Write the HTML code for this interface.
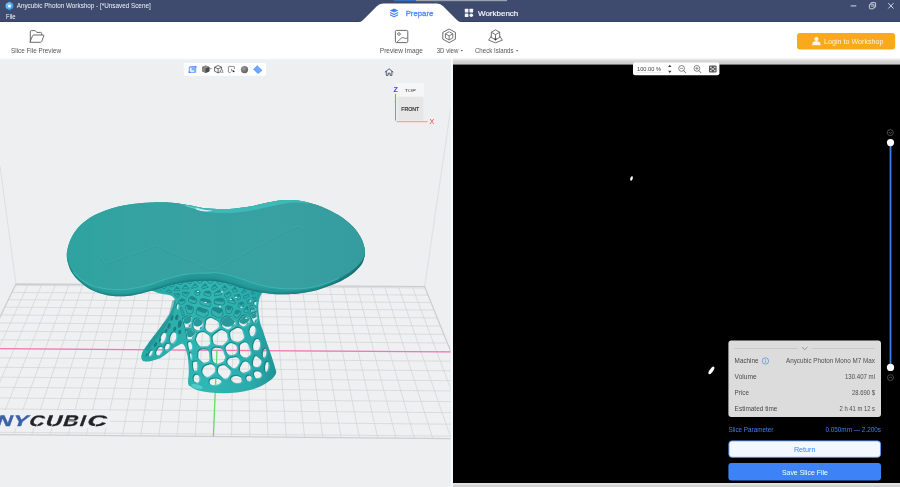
<!DOCTYPE html>
<html><head><meta charset="utf-8"><title>Anycubic Photon Workshop</title>
<style>
html,body{margin:0;padding:0;background:#edeff1;overflow:hidden}
svg{display:block;will-change:transform;font-family:"Liberation Sans",sans-serif}
</style></head><body>
<svg width="900" height="487" viewBox="0 0 900 487">
<rect x="0" y="0" width="900" height="487" fill="#edeff1"/>
<rect x="0" y="22" width="900" height="37" fill="#ffffff"/>
<rect x="0" y="58.6" width="900" height="1" fill="#f4f5f6"/>
<rect x="0" y="0" width="900" height="22" fill="#3e4b6e"/>
<rect x="0" y="21" width="900" height="1" fill="#35415f"/>
<rect x="394" y="0" width="22" height="1.2" fill="#2f6fc0"/>
<rect x="416" y="0" width="91" height="1.2" fill="#9aa0ae"/>
<path d="M358.2,22 Q361,22 362.6,20.4 L376.8,6.2 Q379.4,3.6 383,3.6 L437,3.6 Q440.6,3.6 443.2,6.2 L457.4,20.4 Q459,22 461.8,22 Z" fill="#ffffff"/>
<defs><linearGradient id="appg" x1="0" y1="0" x2="1" y2="1"><stop offset="0" stop-color="#7fd6ff"/><stop offset="1" stop-color="#2f8df0"/></linearGradient></defs>
<path d="M9.5,2.2 L12.9,4.1 L12.9,7.9 L9.5,9.8 L6.1,7.9 L6.1,4.1 Z" fill="url(#appg)" stroke="url(#appg)" stroke-width="0.8" stroke-linejoin="round"/>
<path d="M9.5,4.4 L11,5.2 L11,6.9 L9.5,7.7 L8,6.9 L8,5.2 Z" fill="#eaf6ff"/>
<text x="16.7" y="8.3" font-size="6.7" fill="#f2f4f8" textLength="134" lengthAdjust="spacingAndGlyphs">Anycubic Photon Workshop - [*Unsaved Scene]</text>
<text x="6" y="19.3" font-size="6.8" fill="#f2f4f8" textLength="9.6" lengthAdjust="spacingAndGlyphs">File</text>
<path d="M394.1,8.6 L398.4,10.6 L394.1,12.6 L389.8,10.6 Z" fill="#3f86f7"/>
<path d="M390,12.6 L394.1,14.5 L398.2,12.6" fill="none" stroke="#3f86f7" stroke-width="1.1" stroke-linejoin="round"/>
<path d="M390,14.8 L394.1,16.7 L398.2,14.8" fill="none" stroke="#3f86f7" stroke-width="1.1" stroke-linejoin="round"/>
<text x="405.7" y="15.9" font-size="7.9" fill="#4a8cf8" textLength="27.6" lengthAdjust="spacingAndGlyphs" stroke="#4a8cf8" stroke-width="0.3">Prepare</text>
<rect x="464.8" y="8.8" width="3.6" height="3.6" rx="0.5" fill="#f4f6fa"/>
<rect x="469.5" y="8.8" width="3.6" height="3.6" rx="0.5" fill="#f4f6fa"/>
<rect x="464.8" y="13.4" width="3.6" height="3.6" rx="0.5" fill="#f4f6fa"/>
<circle cx="471.3" cy="15.2" r="1.8" fill="#f4f6fa"/>
<text x="478" y="15.9" font-size="7.9" fill="#f4f6fa" textLength="40.3" lengthAdjust="spacingAndGlyphs" stroke="#f4f6fa" stroke-width="0.2">Workbench</text>
<rect x="850.7" y="5.4" width="5.6" height="1" fill="#d5d9e2"/>
<rect x="869.4" y="4.2" width="4.6" height="4.6" rx="0.8" fill="none" stroke="#d5d9e2" stroke-width="0.9"/>
<path d="M871,4.2 L871,2.9 Q871,2.6 871.4,2.6 L875.2,2.6 Q875.6,2.6 875.6,3 L875.6,6.8 Q875.6,7.2 875.2,7.2 L874,7.2" fill="none" stroke="#d5d9e2" stroke-width="0.9"/>
<rect x="870.6" y="5.6" width="2.6" height="0.8" fill="#d5d9e2"/>
<path d="M888.3,3.2 L893.5,8.5 M893.5,3.2 L888.3,8.5" stroke="#d5d9e2" stroke-width="1" fill="none"/>
<path d="M30.3,41.5 L30.3,31.8 Q30.3,30.6 31.5,30.6 L35.2,30.6 L36.8,32.4 L40.6,32.4 Q41.6,32.4 41.6,33.4 L41.6,35" fill="none" stroke="#5a5a5a" stroke-width="0.9" stroke-linejoin="round"/>
<path d="M29.8,42.3 L32.6,35.6 Q32.9,35 33.6,35 L43.2,35 Q44.1,35 43.8,35.9 L41.6,41.6 Q41.3,42.3 40.6,42.3 Z" fill="none" stroke="#5a5a5a" stroke-width="0.9" stroke-linejoin="round"/>
<text x="11" y="52.7" font-size="6.8" fill="#555555" textLength="50" lengthAdjust="spacingAndGlyphs">Slice File Preview</text>
<rect x="395.4" y="30.4" width="12.4" height="12.2" rx="1.3" fill="none" stroke="#5a5a5a" stroke-width="0.9"/>
<circle cx="399" cy="34" r="1.3" fill="none" stroke="#5a5a5a" stroke-width="0.8"/>
<path d="M397,42.2 L401.2,38.2 Q402.8,36.9 404.2,38 L405.2,38.4 Q406.5,38.6 407.6,37.6" fill="none" stroke="#5a5a5a" stroke-width="0.8"/>
<text x="379.8" y="52.7" font-size="6.8" fill="#555555" textLength="43" lengthAdjust="spacingAndGlyphs">Preview Image</text>
<path d="M449.1,28.999999999999996 L455.40000000000003,32.4 L455.40000000000003,39.199999999999996 L449.1,42.599999999999994 L442.8,39.199999999999996 L442.8,32.4 Z" fill="none" stroke="#5a5a5a" stroke-width="0.9" stroke-linejoin="round"/>
<path d="M449.1,31.699999999999996 L452.8,33.8 L452.8,37.9 L449.1,40.0 L445.40000000000003,37.9 L445.40000000000003,33.8 Z M445.40000000000003,33.8 L449.1,35.9 L452.8,33.8 M449.1,35.9 L449.1,40.0" fill="none" stroke="#5a5a5a" stroke-width="0.8" stroke-linejoin="round"/>
<text x="436.7" y="52.7" font-size="6.8" fill="#555555" textLength="21.7" lengthAdjust="spacingAndGlyphs">3D view</text>
<path d="M460.8,50 L463,50 L461.9,51.4 Z" fill="#5a5a5a"/>
<path d="M495.5,29.799999999999997 L499.7,32.199999999999996 L499.7,37.4 L495.5,39.8 L491.3,37.4 L491.3,32.199999999999996 Z M491.3,32.199999999999996 L495.5,34.599999999999994 L499.7,32.199999999999996 M495.5,34.599999999999994 L495.5,39.8" fill="none" stroke="#5a5a5a" stroke-width="0.85" stroke-linejoin="round"/>
<path d="M491.3,36.0 L488.7,40.199999999999996 L495.5,42.8 L502.3,40.199999999999996 L499.7,36.0" fill="none" stroke="#5a5a5a" stroke-width="0.85" stroke-linejoin="round"/>
<path d="M494.1,38.599999999999994 L496.9,38.599999999999994 L495.5,40.8 Z" fill="#333"/>
<text x="474.9" y="52.7" font-size="6.8" fill="#555555" textLength="38.7" lengthAdjust="spacingAndGlyphs">Check Islands</text>
<path d="M516,50 L518.2,50 L517.1,51.4 Z" fill="#5a5a5a"/>
<rect x="797" y="33" width="98.2" height="16.4" rx="3" fill="#f9aa1b"/>
<circle cx="816.4" cy="39" r="2.1" fill="#fff8e8"/>
<path d="M812.2,45.2 C812.2,42 813.6,41.2 816.4,41.2 C819.2,41.2 820.6,42 820.6,45.2 Z" fill="#fff8e8"/>
<text x="824" y="43.9" font-size="7" fill="#fff3d6" textLength="59.5" lengthAdjust="spacingAndGlyphs">Login to Workshop</text>
<defs><clipPath id="lp"><rect x="0" y="59.6" width="450.4" height="427.4"/></clipPath></defs>
<g clip-path="url(#lp)">
<polygon points="16.00,284.00 424.60,286.60 486.00,438.90 -57.00,434.20" fill="#eff0f2"/>
<path d="M16,284 L0,166" stroke="#d9dadd" stroke-width="0.8" fill="none"/>
<path d="M424.6,286.6 L451,107" stroke="#d9dadd" stroke-width="0.8" fill="none"/>
<path d="M28.27,284.08L-40.73,434.34M41.90,284.16L-22.64,434.50M55.54,284.25L-4.55,434.65M69.19,284.34L13.56,434.81M82.84,284.43L31.67,434.97M96.50,284.51L49.80,435.12M110.16,284.60L67.93,435.28M123.83,284.69L86.08,435.44M137.50,284.77L104.24,435.60M151.18,284.86L122.40,435.75M164.87,284.95L140.58,435.91M178.56,285.03L158.76,436.07M192.26,285.12L176.96,436.23M205.96,285.21L195.17,436.38M219.67,285.30L213.38,436.54M233.38,285.38L231.61,436.70M247.10,285.47L249.85,436.86M260.83,285.56L268.09,437.01M274.56,285.65L286.35,437.17M288.30,285.73L304.61,437.33M302.04,285.82L322.89,437.49M315.79,285.91L341.18,437.65M329.54,286.00L359.48,437.80M343.30,286.08L377.78,437.96M357.07,286.17L396.10,438.12M370.84,286.26L414.43,438.28M384.61,286.35L432.76,438.44M398.40,286.43L451.11,438.60M412.19,286.52L469.47,438.76M-55.82,431.78L485.01,436.44M-50.07,419.95L480.16,424.42M-44.55,408.57L475.51,412.87M-39.22,397.63L471.03,401.76M-34.10,387.08L466.71,391.06M-29.16,376.92L462.56,380.75M-24.40,367.12L458.55,370.81M-19.80,357.66L454.68,361.21M-15.36,348.53L450.95,351.95M-11.07,339.70L447.34,343.01M-6.93,331.17L443.86,334.36M-2.91,322.92L440.48,326.00M0.97,314.93L437.22,317.91M4.73,307.19L434.06,310.07M8.37,299.70L431.00,302.49M11.90,292.43L428.04,295.13M15.33,285.38L425.16,288.00" stroke="#d2d3d5" stroke-width="0.7" fill="none"/>
<polygon points="16.00,284.00 424.60,286.60 486.00,438.90 -57.00,434.20" fill="none" stroke="#cdced0" stroke-width="1.3"/>
<path d="M-15.36,348.53L450.95,351.95" stroke="#f476b0" stroke-width="1.25"/>
<path d="M216.97,350.23L213.38,436.54" stroke="#5fe05f" stroke-width="1.2"/>
<rect x="0" y="410.3" width="110" height="17.6" fill="#eff0f2"/>
<g transform="translate(0,425.7) skewX(-20)" font-weight="bold" font-size="15.2" stroke-width="0.35" stroke-linejoin="round"><text x="-4.5" y="0" textLength="15.7" lengthAdjust="spacingAndGlyphs" fill="#3b62a6" stroke="#3b62a6">N</text><text x="11.6" y="0" textLength="15.4" lengthAdjust="spacingAndGlyphs" fill="#3b62a6" stroke="#3b62a6">Y</text><text x="28" y="0" textLength="15.0" lengthAdjust="spacingAndGlyphs" fill="#222329" stroke="#222329">C</text><text x="44.4" y="0" textLength="16.2" lengthAdjust="spacingAndGlyphs" fill="#222329" stroke="#222329">U</text><text x="62" y="0" textLength="15.0" lengthAdjust="spacingAndGlyphs" fill="#222329" stroke="#222329">B</text><text x="78.8" y="0" textLength="5.2" lengthAdjust="spacingAndGlyphs" fill="#222329" stroke="#222329">I</text><text x="86" y="0" textLength="19.4" lengthAdjust="spacingAndGlyphs" fill="#222329" stroke="#222329">C</text></g>
<path d="M36.5,426.5L38.3,421.6M41.2,418.6L45,419.4M51.5,426.5L53.2,421.8M68,421L79,421M95,426.5L96.8,421.6M100.5,418.6L107,419.4" stroke="#eff0f2" stroke-width="0.9" fill="none"/>
<defs><linearGradient id="topg" gradientUnits="userSpaceOnUse" x1="67" y1="0" x2="365" y2="0"><stop offset="0" stop-color="#2ea3a0"/><stop offset="0.3" stop-color="#36a2a1"/><stop offset="0.75" stop-color="#38a0a1"/><stop offset="1" stop-color="#349c9e"/></linearGradient><linearGradient id="rimg" gradientUnits="userSpaceOnUse" x1="67" y1="0" x2="365" y2="0"><stop offset="0" stop-color="#2ba6a3"/><stop offset="0.25" stop-color="#2aa3a1"/><stop offset="0.42" stop-color="#249796"/><stop offset="0.6" stop-color="#289f9e"/><stop offset="0.85" stop-color="#269a99"/><stop offset="0.93" stop-color="#1d8385"/><stop offset="1" stop-color="#1a777b"/></linearGradient><linearGradient id="pedg" gradientUnits="userSpaceOnUse" x1="150" y1="0" x2="277" y2="0"><stop offset="0" stop-color="#29a9a8"/><stop offset="0.45" stop-color="#30b7b4"/><stop offset="0.8" stop-color="#2aabab"/><stop offset="1" stop-color="#1f9395"/></linearGradient></defs>
<mask id="pedm" maskUnits="userSpaceOnUse" x="130" y="265" width="160" height="135"><rect x="130" y="265" width="160" height="135" fill="#fff"/><path d="M201.7,346.6L207.6,346.0L208.9,345.2L209.6,344.4L210.0,343.3L209.7,337.6L209.3,336.1L208.0,334.7L204.0,332.2L202.2,332.1L199.3,333.1L197.7,334.5L196.3,338.2L196.1,339.7L196.6,341.5L198.8,345.1L200.3,346.3ZM227.8,338.8L226.7,333.2L225.8,332.1L222.9,330.5L221.1,330.3L219.4,330.9L214.1,334.7L213.2,335.8L212.8,336.8L212.7,337.8L213.0,341.6L213.6,343.0L214.6,344.1L216.0,344.7L221.2,345.3L222.3,345.2L223.3,344.8L226.8,341.6L227.6,340.3ZM236.5,341.7L237.9,341.9L239.0,341.7L242.1,340.0L243.5,338.7L244.0,337.2L243.9,335.7L242.3,330.2L241.2,329.0L238.6,327.9L237.5,327.9L236.4,328.2L231.6,331.0L230.6,332.1L230.1,333.5L230.7,337.6L231.4,339.3L232.8,340.4ZM255.6,331.1L255.5,328.5L254.6,326.6L253.9,326.0L253.1,325.8L252.3,326.0L251.6,326.5L250.3,328.3L249.6,330.9L249.7,333.5L250.6,335.4L251.3,336.0L252.1,336.2L252.9,336.0L253.6,335.5L254.9,333.7ZM198.3,356.6L198.4,357.7L199.1,359.0L202.7,362.3L203.7,362.7L204.8,362.8L207.3,362.1L208.3,361.5L209.0,360.7L209.6,359.0L209.1,352.9L208.7,351.4L207.5,350.1L206.1,349.5L201.9,349.6L200.5,350.0L199.3,350.9L198.6,352.2ZM216.3,347.8L214.8,347.9L213.8,348.4L212.7,349.4L212.2,350.4L212.0,351.9L212.7,359.6L213.1,361.1L214.1,362.2L216.1,363.5L218.0,363.7L221.9,362.3L223.2,361.6L223.9,360.7L224.9,358.6L225.2,356.7L222.9,350.5L222.1,349.3L221.2,348.7L220.2,348.3ZM226.8,345.7L225.8,347.3L225.7,349.2L227.2,353.0L228.1,354.1L229.3,354.8L231.1,355.0L234.6,354.4L235.5,353.8L236.3,353.1L236.8,352.1L237.0,351.0L236.9,347.2L236.4,345.8L235.3,344.7L231.9,343.3L230.4,343.3L229.0,343.8ZM240.1,352.9L240.5,354.4L241.2,355.4L242.8,356.7L244.2,357.3L246.6,357.4L247.6,357.1L248.5,356.6L250.1,354.9L250.7,353.5L250.7,352.0L248.3,344.7L247.2,343.3L245.9,342.6L244.0,342.6L241.8,343.6L240.7,344.6L240.1,345.6L239.9,346.7ZM253.8,349.5L255.1,350.2L256.9,350.2L258.3,349.7L259.5,348.5L260.1,345.6L260.1,342.7L259.3,340.4L258.1,339.2L257.5,339.1L256.0,339.5L255.0,340.6L254.1,342.3L253.5,344.3L253.2,346.4L253.4,348.8ZM266.3,353.3L266.4,351.6L266.1,350.0L265.6,349.2L264.9,349.0L263.7,350.2L262.9,353.1L262.9,356.0L263.3,357.1L263.8,357.6L264.6,357.5L265.4,356.5L265.9,355.2ZM193.1,362.5L193.1,366.8L194.0,370.2L194.2,370.6L194.7,370.7L196.7,370.6L197.2,368.8L197.4,366.6L197.3,364.2L196.8,361.7L194.9,361.7ZM206.0,365.7L204.7,366.5L203.9,367.3L202.6,370.1L202.4,372.0L202.9,373.4L204.8,376.1L206.0,376.8L207.8,377.0L209.5,376.4L214.3,372.8L215.0,371.0L215.1,368.0L214.7,366.9L214.0,365.9L211.7,364.5L209.9,364.5ZM230.2,374.2L230.7,372.5L230.6,371.3L230.2,370.3L229.5,369.4L225.3,365.8L223.9,365.3L222.4,365.4L219.9,366.3L218.6,367.7L218.1,369.1L218.0,371.2L218.4,373.0L219.1,373.9L223.3,378.3L224.4,378.7L225.5,378.8L227.2,378.3L228.3,377.3ZM230.6,358.1L229.2,358.6L227.9,359.9L227.4,361.7L227.8,363.5L228.7,364.7L232.2,367.7L234.0,368.2L235.8,367.8L237.3,366.5L239.4,362.5L239.6,361.1L239.2,359.4L238.0,358.0L236.3,357.3ZM240.3,367.2L239.9,369.0L240.3,370.7L241.5,372.1L243.2,372.7L244.7,372.6L248.7,371.1L249.8,370.1L250.5,368.4L250.3,366.6L248.6,363.2L247.2,362.0L245.8,361.6L244.4,361.8L242.8,362.8ZM256.9,356.6L255.7,356.1L254.6,357.4L253.5,359.9L253.0,362.4L253.1,365.3L254.4,366.6L255.8,367.1L257.6,367.1L259.3,366.3L260.2,365.2L261.4,362.4L261.3,361.0L260.7,359.7ZM254.3,372.5L254.0,373.6L254.1,374.7L255.3,377.6L256.9,378.2L258.6,378.1L260.2,377.5L261.2,376.4L261.6,375.2L261.4,374.1L260.8,373.0L259.7,372.0L258.1,371.5L256.8,371.4L255.2,371.8ZM268.5,366.6L268.4,363.3L267.9,362.2L267.2,362.0L266.5,362.5L266.0,363.4L265.1,366.5L265.1,369.7L265.5,370.9L265.9,371.4L266.6,371.4L267.4,370.4L268.1,368.7ZM196.6,382.5L197.5,382.7L198.7,381.9L199.4,380.7L199.7,378.9L199.5,377.4L198.8,376.0L197.8,375.1L196.7,374.8L195.5,375.1L194.6,375.9L193.9,377.2L193.7,378.7L193.9,380.0L194.3,381.2ZM210.0,380.3L209.6,382.1L210.1,383.9L211.0,384.4L212.8,384.9L215.6,385.0L218.2,384.4L220.2,383.3L221.2,381.9L220.9,380.6L220.3,379.9L219.0,379.2L217.2,378.7L215.2,378.6L212.9,378.9L211.1,379.5ZM241.6,381.6L241.2,378.0L240.2,377.2L238.6,376.5L236.1,376.1L233.7,376.5L232.1,377.2L231.2,378.6L231.2,379.7L231.8,380.8L233.2,382.0L234.8,382.7L236.6,383.0L238.7,383.0L240.6,382.4ZM251.6,378.6L251.5,377.6L251.0,376.7L250.2,376.1L249.2,375.8L248.2,375.9L247.3,376.4L246.7,377.2L246.4,378.2L246.5,379.2L247.0,380.1L247.8,380.7L248.8,381.0L249.8,380.9L250.7,380.4L251.3,379.6ZM207.4,319.4L206.5,320.4L206.1,321.4L205.5,327.1L205.8,328.9L206.9,330.4L209.5,332.0L210.6,332.3L211.8,332.2L213.1,331.6L218.3,327.9L219.0,326.6L219.1,325.2L218.6,322.7L217.5,321.2L212.3,318.4L211.2,318.0L209.3,318.2ZM199.0,318.9L197.6,318.7L195.8,319.1L194.5,320.3L193.8,322.1L193.5,325.7L193.9,327.5L194.5,328.4L195.7,329.4L197.5,330.1L199.1,330.0L201.0,329.2L202.0,328.2L202.6,326.8L202.9,323.0L202.6,321.5L201.5,320.1ZM227.4,316.8L225.9,317.0L224.3,318.0L222.2,320.3L221.8,321.4L221.7,322.6L222.2,325.4L223.0,326.9L223.9,327.6L226.1,328.8L228.0,329.2L229.4,328.8L234.1,326.0L235.2,324.5L235.4,323.0L235.2,321.9L234.7,320.9L231.4,317.7L230.1,317.1ZM240.0,320.0L239.3,321.7L239.2,322.8L239.5,323.9L240.6,325.3L242.6,326.3L243.7,326.3L244.7,326.1L247.9,324.1L249.0,323.1L249.5,321.7L249.4,319.8L248.4,317.4L247.3,316.4L245.9,315.8L244.4,315.8L243.1,316.4ZM250.9,314.5L250.5,314.9L253.4,321.6L256.0,322.0L257.1,320.1L256.1,312.4ZM254.2,303.9L255.9,305.1L256.3,301.5L254.5,302.4ZM188.1,343.2L189.2,350.1L191.5,349.9L192.0,348.2L192.1,346.5L191.8,344.5L191.1,343.1L190.2,342.1L189.0,342.2ZM190.8,359.6L191.2,359.3L191.5,358.6L191.7,356.3L191.3,354.1L190.9,353.4L190.4,353.2L189.8,353.9ZM185.9,330.1L187.2,335.5L187.6,339.3L193.0,338.8L195.2,332.6L191.3,329.7ZM191.5,317.0L186.8,316.8L183.4,319.0L183.3,319.9L185.4,327.3L190.4,326.9ZM252.3,306.1L250.7,306.6L251.2,311.2L255.7,309.4L255.7,308.4Z" fill="#000"/><g fill="#000"><ellipse cx="163.2" cy="337.9" rx="2.3" ry="5.4" transform="rotate(20 163.2 337.9)"/><ellipse cx="173.3" cy="337.8" rx="2.9" ry="5.4" transform="rotate(15 173.3 337.8)"/><ellipse cx="167.3" cy="347" rx="2" ry="3.4" transform="rotate(25 167.3 347)"/><ellipse cx="159.4" cy="351.2" rx="2.4" ry="4.4" transform="rotate(28 159.4 351.2)"/><ellipse cx="150.9" cy="353.2" rx="1.2" ry="3" transform="rotate(28 150.9 353.2)"/><ellipse cx="177.6" cy="306.8" rx="0.8" ry="2.5" transform="rotate(10 177.6 306.8)"/></g></mask>
<path d="M197.6,318.7L195.8,319.1L194.5,320.3L193.8,322.1L193.6,324.9L193.6,325.0L193.7,325.1L194.1,325.4L194.1,325.4L194.5,325.7L194.6,325.7L195.0,325.9L195.1,326.0L195.5,326.1L195.6,326.2L196.0,326.3L196.1,326.3L196.5,326.4L196.6,326.4L197.1,326.5L197.2,326.5L197.6,326.5L197.7,326.5L198.2,326.4L198.3,326.4L198.7,326.3L198.8,326.3L199.2,326.2L199.3,326.1L199.7,326.0L199.8,325.9L200.2,325.7L200.3,325.7L200.6,325.4L200.7,325.4L201.1,325.1L201.1,325.0L201.5,324.7L201.5,324.6L201.8,324.3L201.9,324.2L202.1,323.8L202.2,323.8L202.4,323.4L202.4,323.3L202.6,322.9L202.6,322.8L202.7,322.3L202.8,322.3L202.6,321.5L201.5,320.1L199.0,318.9Z" fill="#27999b"/>
<path d="M201.0,329.2L202.0,328.2L202.6,326.8L202.6,326.5L202.4,326.5L202.2,326.5L201.9,326.5L201.6,326.6L201.4,326.7L201.2,326.8L200.9,326.9L200.7,327.1L200.5,327.2L200.4,327.4L200.2,327.6L200.1,327.9L200.0,328.1L199.9,328.3L199.8,328.6L199.8,328.8L199.8,329.1L199.8,329.4L199.8,329.6L199.8,329.7Z" fill="#2aa5a5"/>
<path d="M225.9,317.0L224.3,318.0L222.2,320.3L221.8,321.4L221.7,322.6L222.0,324.1L222.1,324.3L222.2,324.4L222.6,324.8L222.7,324.9L223.2,325.3L223.3,325.4L223.8,325.7L223.9,325.8L224.5,326.1L224.6,326.1L225.2,326.4L225.2,326.4L225.9,326.6L226.0,326.6L226.6,326.7L226.7,326.8L227.3,326.8L227.4,326.8L228.1,326.8L228.2,326.8L228.8,326.8L228.9,326.7L229.5,326.6L229.6,326.6L230.3,326.4L230.4,326.4L230.9,326.1L231.0,326.1L231.6,325.8L231.7,325.7L232.2,325.4L232.3,325.3L232.8,324.9L232.9,324.8L233.3,324.4L233.4,324.3L233.8,323.8L233.9,323.7L234.2,323.2L234.3,323.1L234.6,322.5L234.6,322.5L234.9,321.9L234.9,321.8L235.0,321.5L234.7,320.9L231.4,317.7L230.1,317.1L227.4,316.8Z" fill="#27999b"/>
<path d="M234.1,326.0L235.2,324.5L235.2,324.3L234.9,324.3L234.5,324.3L234.2,324.4L233.8,324.5L233.4,324.6L233.1,324.8L232.8,325.0L232.5,325.2L232.2,325.4L231.9,325.7L231.7,326.0L231.5,326.3L231.4,326.7L231.2,327.0L231.1,327.4L231.1,327.8L231.1,327.8Z" fill="#2aa5a5"/>
<path d="M239.3,321.7L239.2,322.0L239.5,322.3L239.6,322.4L240.0,322.7L240.1,322.7L240.5,323.0L240.6,323.1L241.0,323.3L241.1,323.3L241.5,323.5L241.6,323.6L242.1,323.7L242.2,323.7L242.7,323.8L242.8,323.8L243.2,323.9L243.3,323.9L243.8,323.9L243.9,323.9L244.4,323.8L244.5,323.8L245.0,323.7L245.1,323.7L245.5,323.6L245.6,323.5L246.1,323.3L246.2,323.3L246.6,323.1L246.7,323.0L247.1,322.7L247.2,322.7L247.5,322.4L247.6,322.3L248.0,322.0L248.0,321.9L248.3,321.5L248.4,321.4L248.7,321.0L248.7,320.9L248.9,320.5L249.0,320.4L249.2,320.0L249.2,319.9L249.3,319.5L248.4,317.4L247.3,316.4L245.9,315.8L244.4,315.8L243.1,316.4L240.0,320.0Z" fill="#27999b"/>
<path d="M247.9,324.1L249.0,323.1L249.2,322.4L249.0,322.4L248.8,322.4L248.5,322.5L248.2,322.5L247.9,322.6L247.7,322.8L247.4,322.9L247.2,323.1L247.0,323.3L246.8,323.5L246.6,323.7L246.5,324.0L246.4,324.2L246.3,324.5L246.2,324.8L246.2,325.0L246.2,325.2Z" fill="#2aa5a5"/>
<path d="M250.5,314.9L252.0,318.3L252.0,318.3L252.4,318.4L252.4,318.4L252.8,318.4L252.9,318.4L253.2,318.4L253.3,318.4L253.6,318.4L253.7,318.4L254.0,318.3L254.1,318.3L254.4,318.2L254.4,318.2L254.7,318.1L254.8,318.0L255.1,317.9L255.2,317.8L255.4,317.6L255.5,317.6L255.8,317.4L255.8,317.3L256.0,317.1L256.1,317.0L256.3,316.8L256.4,316.7L256.5,316.5L256.6,316.4L256.6,316.3L256.1,312.4L250.9,314.5Z" fill="#27999b"/>
<path d="M256.0,322.0L257.1,320.1L257.0,319.2L256.9,319.2L256.8,319.2L256.6,319.2L256.4,319.2L256.2,319.2L256.0,319.3L255.9,319.3L255.7,319.4L255.6,319.5L255.4,319.6L255.3,319.7L255.2,319.9L255.1,320.0L255.0,320.2L254.9,320.3L254.8,320.5L254.8,320.7L254.8,320.8L254.7,321.0L254.8,321.2L254.8,321.4L254.8,321.5L254.9,321.7L255.0,321.9Z" fill="#2aa5a5"/>
<path d="M187.2,335.5L187.3,336.5L187.4,336.5L187.5,336.6L187.9,336.7L188.0,336.8L188.4,336.9L188.5,336.9L188.9,337.0L189.0,337.0L189.4,337.1L189.5,337.1L190.0,337.1L190.1,337.1L190.5,337.0L190.6,337.0L191.0,336.9L191.1,336.9L191.6,336.8L191.6,336.7L192.1,336.6L192.1,336.5L192.5,336.3L192.6,336.3L193.0,336.0L193.1,336.0L193.4,335.7L193.5,335.6L193.8,335.3L193.8,335.2L194.1,334.9L194.2,334.8L194.4,334.5L194.5,334.4L194.7,334.0L194.7,333.9L194.9,333.5L194.9,333.4L195.0,333.0L195.1,332.9L195.1,332.6L191.3,329.7L185.9,330.1Z" fill="#27999b"/>
<path d="M193.0,338.8L194.1,335.8L194.0,335.8L193.7,335.9L193.5,336.0L193.3,336.1L193.1,336.3L192.9,336.5L192.7,336.6L192.5,336.9L192.4,337.1L192.3,337.3L192.2,337.5L192.2,337.8L192.1,338.0L192.1,338.3L192.1,338.6L192.2,338.8L192.2,338.8Z" fill="#2aa5a5"/>
<path d="M186.8,316.8L183.4,319.0L183.3,319.9L184.2,323.2L184.4,323.3L184.5,323.4L184.9,323.5L185.0,323.5L185.3,323.6L185.4,323.7L185.8,323.7L185.9,323.8L186.3,323.8L186.4,323.8L186.8,323.8L186.9,323.8L187.3,323.8L187.4,323.7L187.7,323.7L187.8,323.6L188.2,323.5L188.3,323.5L188.6,323.4L188.7,323.3L189.1,323.1L189.2,323.1L189.5,322.9L189.6,322.8L189.9,322.6L189.9,322.5L190.2,322.2L190.3,322.2L190.5,321.9L190.6,321.8L190.8,321.5L190.8,321.4L191.0,321.0L191.0,321.0L191.4,317.8L191.4,317.7L191.3,317.6L191.2,317.3L191.2,317.2L191.1,317.0Z" fill="#27999b"/>
<path d="M190.4,326.9L190.7,324.0L190.5,324.0L190.3,324.1L190.1,324.2L189.9,324.3L189.7,324.4L189.5,324.5L189.4,324.7L189.2,324.8L189.1,325.0L189.0,325.2L188.9,325.4L188.8,325.6L188.7,325.8L188.7,326.0L188.7,326.3L188.7,326.5L188.7,326.7L188.8,326.9L188.8,327.0Z" fill="#2aa5a5"/>
<path d="M250.7,306.6L251.1,310.3L251.2,310.3L251.3,310.4L251.6,310.4L251.7,310.5L251.9,310.5L252.0,310.5L252.2,310.5L252.3,310.5L252.5,310.5L252.6,310.5L252.9,310.5L253.0,310.5L253.0,310.5L254.4,309.9L254.4,309.9L254.5,309.9L254.7,309.7L254.7,309.6L254.9,309.5L255.0,309.4L255.1,309.2L255.2,309.1L255.3,308.9L255.4,308.9L255.5,308.7L255.5,308.6L255.6,308.4L252.3,306.1Z" fill="#27999b"/>
<path d="M255.7,309.4L255.7,308.9L255.6,308.9L255.5,308.9L255.4,308.8L255.2,308.8L255.1,308.8L254.9,308.9L254.8,308.9L254.7,308.9L254.6,309.0L254.4,309.1L254.3,309.2L254.2,309.3L254.1,309.4L254.1,309.5L254.0,309.6L253.9,309.7L253.9,309.8L253.8,310.0L253.8,310.1L253.8,310.2Z" fill="#2aa5a5"/>
<g mask="url(#pedm)"><path d="M148.00,289.00C149.67,289.67 155.00,292.07 158.00,293.00C161.00,293.93 163.67,294.07 166.00,294.60C168.33,295.13 170.57,295.47 172.00,296.20C173.43,296.93 174.17,298.53 174.60,299.00L174.60,299.00C174.37,300.17 173.90,303.67 173.20,306.00C172.50,308.33 171.40,310.93 170.40,313.00C169.40,315.07 168.83,316.08 167.20,318.40C165.57,320.72 162.82,324.00 160.60,326.90C158.38,329.80 156.13,332.83 153.90,335.80C151.67,338.77 149.05,342.12 147.20,344.70C145.35,347.28 143.82,349.27 142.80,351.30C141.78,353.33 141.38,355.97 141.10,356.90L141.10,356.90C141.38,357.55 141.78,360.02 142.80,360.80C143.82,361.58 145.35,361.70 147.20,361.60C149.05,361.50 151.67,360.80 153.90,360.20C156.13,359.60 159.48,358.37 160.60,358.00L160.60,358.00C161.15,357.63 162.62,356.73 163.90,355.80C165.18,354.87 166.63,353.70 168.30,352.40C169.97,351.10 172.05,349.28 173.90,348.00C175.75,346.72 177.98,345.47 179.40,344.70C180.82,343.93 181.90,343.62 182.40,343.40L182.40,343.40C182.83,343.98 184.23,345.20 185.00,346.90C185.77,348.60 186.47,351.33 187.00,353.60C187.53,355.87 187.90,357.43 188.20,360.50C188.50,363.57 188.83,368.47 188.80,372.00C188.77,375.53 188.00,379.43 188.00,381.70C188.00,383.97 188.67,384.95 188.80,385.60L188.80,385.60C190.12,386.33 193.17,388.85 196.70,390.00C200.23,391.15 205.57,391.95 210.00,392.50C214.43,393.05 218.85,393.30 223.30,393.30C227.75,393.30 232.25,393.05 236.70,392.50C241.15,391.95 245.83,391.12 250.00,390.00C254.17,388.88 258.08,387.60 261.70,385.80C265.32,384.00 269.35,381.13 271.70,379.20C274.05,377.27 275.12,375.03 275.80,374.20L275.80,374.20C275.88,373.78 276.22,372.12 276.30,371.70L276.30,371.70C275.80,370.03 274.63,365.87 273.30,361.70C271.97,357.53 269.97,351.70 268.30,346.70C266.63,341.70 264.68,335.82 263.30,331.70C261.92,327.58 260.83,325.83 260.00,322.00C259.17,318.17 258.43,312.45 258.30,308.70C258.17,304.95 258.58,302.12 259.20,299.50C259.82,296.88 260.87,294.92 262.00,293.00C263.13,291.08 265.33,288.83 266.00,288.00L255,276 L205,270 L160,278 Z" fill="url(#pedg)"/><g fill="none" stroke="#17797c" stroke-opacity="0.75" stroke-width="1.3" transform="translate(-0.55,-0.55)"><path d="M201.7,346.6L207.6,346.0L208.9,345.2L209.6,344.4L210.0,343.3L209.7,337.6L209.3,336.1L208.0,334.7L204.0,332.2L202.2,332.1L199.3,333.1L197.7,334.5L196.3,338.2L196.1,339.7L196.6,341.5L198.8,345.1L200.3,346.3ZM227.8,338.8L226.7,333.2L225.8,332.1L222.9,330.5L221.1,330.3L219.4,330.9L214.1,334.7L213.2,335.8L212.8,336.8L212.7,337.8L213.0,341.6L213.6,343.0L214.6,344.1L216.0,344.7L221.2,345.3L222.3,345.2L223.3,344.8L226.8,341.6L227.6,340.3ZM236.5,341.7L237.9,341.9L239.0,341.7L242.1,340.0L243.5,338.7L244.0,337.2L243.9,335.7L242.3,330.2L241.2,329.0L238.6,327.9L237.5,327.9L236.4,328.2L231.6,331.0L230.6,332.1L230.1,333.5L230.7,337.6L231.4,339.3L232.8,340.4ZM255.6,331.1L255.5,328.5L254.6,326.6L253.9,326.0L253.1,325.8L252.3,326.0L251.6,326.5L250.3,328.3L249.6,330.9L249.7,333.5L250.6,335.4L251.3,336.0L252.1,336.2L252.9,336.0L253.6,335.5L254.9,333.7ZM198.3,356.6L198.4,357.7L199.1,359.0L202.7,362.3L203.7,362.7L204.8,362.8L207.3,362.1L208.3,361.5L209.0,360.7L209.6,359.0L209.1,352.9L208.7,351.4L207.5,350.1L206.1,349.5L201.9,349.6L200.5,350.0L199.3,350.9L198.6,352.2ZM216.3,347.8L214.8,347.9L213.8,348.4L212.7,349.4L212.2,350.4L212.0,351.9L212.7,359.6L213.1,361.1L214.1,362.2L216.1,363.5L218.0,363.7L221.9,362.3L223.2,361.6L223.9,360.7L224.9,358.6L225.2,356.7L222.9,350.5L222.1,349.3L221.2,348.7L220.2,348.3ZM226.8,345.7L225.8,347.3L225.7,349.2L227.2,353.0L228.1,354.1L229.3,354.8L231.1,355.0L234.6,354.4L235.5,353.8L236.3,353.1L236.8,352.1L237.0,351.0L236.9,347.2L236.4,345.8L235.3,344.7L231.9,343.3L230.4,343.3L229.0,343.8ZM240.1,352.9L240.5,354.4L241.2,355.4L242.8,356.7L244.2,357.3L246.6,357.4L247.6,357.1L248.5,356.6L250.1,354.9L250.7,353.5L250.7,352.0L248.3,344.7L247.2,343.3L245.9,342.6L244.0,342.6L241.8,343.6L240.7,344.6L240.1,345.6L239.9,346.7ZM253.8,349.5L255.1,350.2L256.9,350.2L258.3,349.7L259.5,348.5L260.1,345.6L260.1,342.7L259.3,340.4L258.1,339.2L257.5,339.1L256.0,339.5L255.0,340.6L254.1,342.3L253.5,344.3L253.2,346.4L253.4,348.8ZM266.3,353.3L266.4,351.6L266.1,350.0L265.6,349.2L264.9,349.0L263.7,350.2L262.9,353.1L262.9,356.0L263.3,357.1L263.8,357.6L264.6,357.5L265.4,356.5L265.9,355.2ZM193.1,362.5L193.1,366.8L194.0,370.2L194.2,370.6L194.7,370.7L196.7,370.6L197.2,368.8L197.4,366.6L197.3,364.2L196.8,361.7L194.9,361.7ZM206.0,365.7L204.7,366.5L203.9,367.3L202.6,370.1L202.4,372.0L202.9,373.4L204.8,376.1L206.0,376.8L207.8,377.0L209.5,376.4L214.3,372.8L215.0,371.0L215.1,368.0L214.7,366.9L214.0,365.9L211.7,364.5L209.9,364.5ZM230.2,374.2L230.7,372.5L230.6,371.3L230.2,370.3L229.5,369.4L225.3,365.8L223.9,365.3L222.4,365.4L219.9,366.3L218.6,367.7L218.1,369.1L218.0,371.2L218.4,373.0L219.1,373.9L223.3,378.3L224.4,378.7L225.5,378.8L227.2,378.3L228.3,377.3ZM230.6,358.1L229.2,358.6L227.9,359.9L227.4,361.7L227.8,363.5L228.7,364.7L232.2,367.7L234.0,368.2L235.8,367.8L237.3,366.5L239.4,362.5L239.6,361.1L239.2,359.4L238.0,358.0L236.3,357.3ZM240.3,367.2L239.9,369.0L240.3,370.7L241.5,372.1L243.2,372.7L244.7,372.6L248.7,371.1L249.8,370.1L250.5,368.4L250.3,366.6L248.6,363.2L247.2,362.0L245.8,361.6L244.4,361.8L242.8,362.8ZM256.9,356.6L255.7,356.1L254.6,357.4L253.5,359.9L253.0,362.4L253.1,365.3L254.4,366.6L255.8,367.1L257.6,367.1L259.3,366.3L260.2,365.2L261.4,362.4L261.3,361.0L260.7,359.7ZM254.3,372.5L254.0,373.6L254.1,374.7L255.3,377.6L256.9,378.2L258.6,378.1L260.2,377.5L261.2,376.4L261.6,375.2L261.4,374.1L260.8,373.0L259.7,372.0L258.1,371.5L256.8,371.4L255.2,371.8ZM268.5,366.6L268.4,363.3L267.9,362.2L267.2,362.0L266.5,362.5L266.0,363.4L265.1,366.5L265.1,369.7L265.5,370.9L265.9,371.4L266.6,371.4L267.4,370.4L268.1,368.7ZM196.6,382.5L197.5,382.7L198.7,381.9L199.4,380.7L199.7,378.9L199.5,377.4L198.8,376.0L197.8,375.1L196.7,374.8L195.5,375.1L194.6,375.9L193.9,377.2L193.7,378.7L193.9,380.0L194.3,381.2ZM210.0,380.3L209.6,382.1L210.1,383.9L211.0,384.4L212.8,384.9L215.6,385.0L218.2,384.4L220.2,383.3L221.2,381.9L220.9,380.6L220.3,379.9L219.0,379.2L217.2,378.7L215.2,378.6L212.9,378.9L211.1,379.5ZM241.6,381.6L241.2,378.0L240.2,377.2L238.6,376.5L236.1,376.1L233.7,376.5L232.1,377.2L231.2,378.6L231.2,379.7L231.8,380.8L233.2,382.0L234.8,382.7L236.6,383.0L238.7,383.0L240.6,382.4ZM251.6,378.6L251.5,377.6L251.0,376.7L250.2,376.1L249.2,375.8L248.2,375.9L247.3,376.4L246.7,377.2L246.4,378.2L246.5,379.2L247.0,380.1L247.8,380.7L248.8,381.0L249.8,380.9L250.7,380.4L251.3,379.6ZM207.4,319.4L206.5,320.4L206.1,321.4L205.5,327.1L205.8,328.9L206.9,330.4L209.5,332.0L210.6,332.3L211.8,332.2L213.1,331.6L218.3,327.9L219.0,326.6L219.1,325.2L218.6,322.7L217.5,321.2L212.3,318.4L211.2,318.0L209.3,318.2ZM199.0,318.9L197.6,318.7L195.8,319.1L194.5,320.3L193.8,322.1L193.5,325.7L193.9,327.5L194.5,328.4L195.7,329.4L197.5,330.1L199.1,330.0L201.0,329.2L202.0,328.2L202.6,326.8L202.9,323.0L202.6,321.5L201.5,320.1ZM227.4,316.8L225.9,317.0L224.3,318.0L222.2,320.3L221.8,321.4L221.7,322.6L222.2,325.4L223.0,326.9L223.9,327.6L226.1,328.8L228.0,329.2L229.4,328.8L234.1,326.0L235.2,324.5L235.4,323.0L235.2,321.9L234.7,320.9L231.4,317.7L230.1,317.1ZM240.0,320.0L239.3,321.7L239.2,322.8L239.5,323.9L240.6,325.3L242.6,326.3L243.7,326.3L244.7,326.1L247.9,324.1L249.0,323.1L249.5,321.7L249.4,319.8L248.4,317.4L247.3,316.4L245.9,315.8L244.4,315.8L243.1,316.4ZM250.9,314.5L250.5,314.9L253.4,321.6L256.0,322.0L257.1,320.1L256.1,312.4ZM254.2,303.9L255.9,305.1L256.3,301.5L254.5,302.4ZM188.1,343.2L189.2,350.1L191.5,349.9L192.0,348.2L192.1,346.5L191.8,344.5L191.1,343.1L190.2,342.1L189.0,342.2ZM190.8,359.6L191.2,359.3L191.5,358.6L191.7,356.3L191.3,354.1L190.9,353.4L190.4,353.2L189.8,353.9ZM185.9,330.1L187.2,335.5L187.6,339.3L193.0,338.8L195.2,332.6L191.3,329.7ZM191.5,317.0L186.8,316.8L183.4,319.0L183.3,319.9L185.4,327.3L190.4,326.9ZM252.3,306.1L250.7,306.6L251.2,311.2L255.7,309.4L255.7,308.4Z"/><ellipse cx="163.2" cy="337.9" rx="2.3" ry="5.4" transform="rotate(20 163.2 337.9)"/><ellipse cx="173.3" cy="337.8" rx="2.9" ry="5.4" transform="rotate(15 173.3 337.8)"/><ellipse cx="167.3" cy="347" rx="2" ry="3.4" transform="rotate(25 167.3 347)"/><ellipse cx="159.4" cy="351.2" rx="2.4" ry="4.4" transform="rotate(28 159.4 351.2)"/><ellipse cx="150.9" cy="353.2" rx="1.2" ry="3" transform="rotate(28 150.9 353.2)"/><ellipse cx="177.6" cy="306.8" rx="0.8" ry="2.5" transform="rotate(10 177.6 306.8)"/></g><g fill="none" stroke="#63dcd8" stroke-opacity="0.55" stroke-width="1" transform="translate(0.5,0.5)"><path d="M201.7,346.6L207.6,346.0L208.9,345.2L209.6,344.4L210.0,343.3L209.7,337.6L209.3,336.1L208.0,334.7L204.0,332.2L202.2,332.1L199.3,333.1L197.7,334.5L196.3,338.2L196.1,339.7L196.6,341.5L198.8,345.1L200.3,346.3ZM227.8,338.8L226.7,333.2L225.8,332.1L222.9,330.5L221.1,330.3L219.4,330.9L214.1,334.7L213.2,335.8L212.8,336.8L212.7,337.8L213.0,341.6L213.6,343.0L214.6,344.1L216.0,344.7L221.2,345.3L222.3,345.2L223.3,344.8L226.8,341.6L227.6,340.3ZM236.5,341.7L237.9,341.9L239.0,341.7L242.1,340.0L243.5,338.7L244.0,337.2L243.9,335.7L242.3,330.2L241.2,329.0L238.6,327.9L237.5,327.9L236.4,328.2L231.6,331.0L230.6,332.1L230.1,333.5L230.7,337.6L231.4,339.3L232.8,340.4ZM255.6,331.1L255.5,328.5L254.6,326.6L253.9,326.0L253.1,325.8L252.3,326.0L251.6,326.5L250.3,328.3L249.6,330.9L249.7,333.5L250.6,335.4L251.3,336.0L252.1,336.2L252.9,336.0L253.6,335.5L254.9,333.7ZM198.3,356.6L198.4,357.7L199.1,359.0L202.7,362.3L203.7,362.7L204.8,362.8L207.3,362.1L208.3,361.5L209.0,360.7L209.6,359.0L209.1,352.9L208.7,351.4L207.5,350.1L206.1,349.5L201.9,349.6L200.5,350.0L199.3,350.9L198.6,352.2ZM216.3,347.8L214.8,347.9L213.8,348.4L212.7,349.4L212.2,350.4L212.0,351.9L212.7,359.6L213.1,361.1L214.1,362.2L216.1,363.5L218.0,363.7L221.9,362.3L223.2,361.6L223.9,360.7L224.9,358.6L225.2,356.7L222.9,350.5L222.1,349.3L221.2,348.7L220.2,348.3ZM226.8,345.7L225.8,347.3L225.7,349.2L227.2,353.0L228.1,354.1L229.3,354.8L231.1,355.0L234.6,354.4L235.5,353.8L236.3,353.1L236.8,352.1L237.0,351.0L236.9,347.2L236.4,345.8L235.3,344.7L231.9,343.3L230.4,343.3L229.0,343.8ZM240.1,352.9L240.5,354.4L241.2,355.4L242.8,356.7L244.2,357.3L246.6,357.4L247.6,357.1L248.5,356.6L250.1,354.9L250.7,353.5L250.7,352.0L248.3,344.7L247.2,343.3L245.9,342.6L244.0,342.6L241.8,343.6L240.7,344.6L240.1,345.6L239.9,346.7ZM253.8,349.5L255.1,350.2L256.9,350.2L258.3,349.7L259.5,348.5L260.1,345.6L260.1,342.7L259.3,340.4L258.1,339.2L257.5,339.1L256.0,339.5L255.0,340.6L254.1,342.3L253.5,344.3L253.2,346.4L253.4,348.8ZM266.3,353.3L266.4,351.6L266.1,350.0L265.6,349.2L264.9,349.0L263.7,350.2L262.9,353.1L262.9,356.0L263.3,357.1L263.8,357.6L264.6,357.5L265.4,356.5L265.9,355.2ZM193.1,362.5L193.1,366.8L194.0,370.2L194.2,370.6L194.7,370.7L196.7,370.6L197.2,368.8L197.4,366.6L197.3,364.2L196.8,361.7L194.9,361.7ZM206.0,365.7L204.7,366.5L203.9,367.3L202.6,370.1L202.4,372.0L202.9,373.4L204.8,376.1L206.0,376.8L207.8,377.0L209.5,376.4L214.3,372.8L215.0,371.0L215.1,368.0L214.7,366.9L214.0,365.9L211.7,364.5L209.9,364.5ZM230.2,374.2L230.7,372.5L230.6,371.3L230.2,370.3L229.5,369.4L225.3,365.8L223.9,365.3L222.4,365.4L219.9,366.3L218.6,367.7L218.1,369.1L218.0,371.2L218.4,373.0L219.1,373.9L223.3,378.3L224.4,378.7L225.5,378.8L227.2,378.3L228.3,377.3ZM230.6,358.1L229.2,358.6L227.9,359.9L227.4,361.7L227.8,363.5L228.7,364.7L232.2,367.7L234.0,368.2L235.8,367.8L237.3,366.5L239.4,362.5L239.6,361.1L239.2,359.4L238.0,358.0L236.3,357.3ZM240.3,367.2L239.9,369.0L240.3,370.7L241.5,372.1L243.2,372.7L244.7,372.6L248.7,371.1L249.8,370.1L250.5,368.4L250.3,366.6L248.6,363.2L247.2,362.0L245.8,361.6L244.4,361.8L242.8,362.8ZM256.9,356.6L255.7,356.1L254.6,357.4L253.5,359.9L253.0,362.4L253.1,365.3L254.4,366.6L255.8,367.1L257.6,367.1L259.3,366.3L260.2,365.2L261.4,362.4L261.3,361.0L260.7,359.7ZM254.3,372.5L254.0,373.6L254.1,374.7L255.3,377.6L256.9,378.2L258.6,378.1L260.2,377.5L261.2,376.4L261.6,375.2L261.4,374.1L260.8,373.0L259.7,372.0L258.1,371.5L256.8,371.4L255.2,371.8ZM268.5,366.6L268.4,363.3L267.9,362.2L267.2,362.0L266.5,362.5L266.0,363.4L265.1,366.5L265.1,369.7L265.5,370.9L265.9,371.4L266.6,371.4L267.4,370.4L268.1,368.7ZM196.6,382.5L197.5,382.7L198.7,381.9L199.4,380.7L199.7,378.9L199.5,377.4L198.8,376.0L197.8,375.1L196.7,374.8L195.5,375.1L194.6,375.9L193.9,377.2L193.7,378.7L193.9,380.0L194.3,381.2ZM210.0,380.3L209.6,382.1L210.1,383.9L211.0,384.4L212.8,384.9L215.6,385.0L218.2,384.4L220.2,383.3L221.2,381.9L220.9,380.6L220.3,379.9L219.0,379.2L217.2,378.7L215.2,378.6L212.9,378.9L211.1,379.5ZM241.6,381.6L241.2,378.0L240.2,377.2L238.6,376.5L236.1,376.1L233.7,376.5L232.1,377.2L231.2,378.6L231.2,379.7L231.8,380.8L233.2,382.0L234.8,382.7L236.6,383.0L238.7,383.0L240.6,382.4ZM251.6,378.6L251.5,377.6L251.0,376.7L250.2,376.1L249.2,375.8L248.2,375.9L247.3,376.4L246.7,377.2L246.4,378.2L246.5,379.2L247.0,380.1L247.8,380.7L248.8,381.0L249.8,380.9L250.7,380.4L251.3,379.6ZM207.4,319.4L206.5,320.4L206.1,321.4L205.5,327.1L205.8,328.9L206.9,330.4L209.5,332.0L210.6,332.3L211.8,332.2L213.1,331.6L218.3,327.9L219.0,326.6L219.1,325.2L218.6,322.7L217.5,321.2L212.3,318.4L211.2,318.0L209.3,318.2ZM199.0,318.9L197.6,318.7L195.8,319.1L194.5,320.3L193.8,322.1L193.5,325.7L193.9,327.5L194.5,328.4L195.7,329.4L197.5,330.1L199.1,330.0L201.0,329.2L202.0,328.2L202.6,326.8L202.9,323.0L202.6,321.5L201.5,320.1ZM227.4,316.8L225.9,317.0L224.3,318.0L222.2,320.3L221.8,321.4L221.7,322.6L222.2,325.4L223.0,326.9L223.9,327.6L226.1,328.8L228.0,329.2L229.4,328.8L234.1,326.0L235.2,324.5L235.4,323.0L235.2,321.9L234.7,320.9L231.4,317.7L230.1,317.1ZM240.0,320.0L239.3,321.7L239.2,322.8L239.5,323.9L240.6,325.3L242.6,326.3L243.7,326.3L244.7,326.1L247.9,324.1L249.0,323.1L249.5,321.7L249.4,319.8L248.4,317.4L247.3,316.4L245.9,315.8L244.4,315.8L243.1,316.4ZM250.9,314.5L250.5,314.9L253.4,321.6L256.0,322.0L257.1,320.1L256.1,312.4ZM254.2,303.9L255.9,305.1L256.3,301.5L254.5,302.4ZM188.1,343.2L189.2,350.1L191.5,349.9L192.0,348.2L192.1,346.5L191.8,344.5L191.1,343.1L190.2,342.1L189.0,342.2ZM190.8,359.6L191.2,359.3L191.5,358.6L191.7,356.3L191.3,354.1L190.9,353.4L190.4,353.2L189.8,353.9ZM185.9,330.1L187.2,335.5L187.6,339.3L193.0,338.8L195.2,332.6L191.3,329.7ZM191.5,317.0L186.8,316.8L183.4,319.0L183.3,319.9L185.4,327.3L190.4,326.9ZM252.3,306.1L250.7,306.6L251.2,311.2L255.7,309.4L255.7,308.4Z"/><ellipse cx="163.2" cy="337.9" rx="2.3" ry="5.4" transform="rotate(20 163.2 337.9)"/><ellipse cx="173.3" cy="337.8" rx="2.9" ry="5.4" transform="rotate(15 173.3 337.8)"/><ellipse cx="167.3" cy="347" rx="2" ry="3.4" transform="rotate(25 167.3 347)"/><ellipse cx="159.4" cy="351.2" rx="2.4" ry="4.4" transform="rotate(28 159.4 351.2)"/><ellipse cx="150.9" cy="353.2" rx="1.2" ry="3" transform="rotate(28 150.9 353.2)"/><ellipse cx="177.6" cy="306.8" rx="0.8" ry="2.5" transform="rotate(10 177.6 306.8)"/></g></g>
<ellipse cx="197" cy="386.6" rx="6" ry="2.2" transform="rotate(14 197 386.6)" fill="#6fe0dc" opacity="0.55"/>
<path d="M172.6,300 L169,314 L160,328 L150,341 L145,350 L148,351 L156,340 L165,328 L173,314 L176,301 Z" fill="#1c8a8c" opacity="0.5"/>
<path d="M156.7,289.7L158.8,287.7L158.8,282.7L158.5,282.7L153.5,287.3Z" fill="#1f8a8c"/>
<path d="M157.9,287.4L157.9,285.8L156.8,286.8L155.9,286.1L154.7,287.2L156.6,288.6Z" fill="#3cbfbc" opacity="0.75"/>
<path d="M166.4,285.2L165.8,284.1L165.0,283.5L163.8,283.3L162.8,283.5L162.0,284.1L161.4,284.9L161.2,286.3L161.4,287.3L162.0,288.1L162.9,288.7L163.9,288.9L164.8,288.7L165.8,288.1L166.4,287.2L166.5,286.1Z" fill="#1f8a8c"/>
<path d="M165.6,285.5L165.4,285.8L164.7,286.3L164.1,286.4L163.4,286.3L162.8,285.9L162.4,285.3L162.3,285.0L162.2,285.2L162.1,286.3L162.2,287.0L162.6,287.6L163.2,288.0L163.9,288.1L164.5,288.0L165.2,287.5L165.6,286.9L165.7,286.1L165.6,285.5Z" fill="#3cbfbc" opacity="0.75"/>
<path d="M169.0,285.3L169.6,286.4L170.9,287.2L172.4,287.1L173.4,286.3L174.5,284.8L174.7,283.6L174.1,281.2L173.3,280.1L172.4,279.6L171.4,279.5L169.9,279.9L168.9,280.6L168.4,281.5L168.3,282.4Z" fill="#1f8a8c"/>
<path d="M170.2,285.8L171.1,286.4L172.1,286.3L172.9,285.8L173.7,284.5L173.9,283.6L173.6,282.5L173.1,283.2L172.3,283.7L171.3,283.8L170.4,283.3L169.9,282.4L169.6,281.1L169.5,281.1L169.2,281.7L169.1,282.4L169.7,285.0Z" fill="#3cbfbc" opacity="0.75"/>
<path d="M178.6,284.6L179.8,285.1L181.0,284.9L181.9,284.4L183.4,282.5L183.7,281.3L183.5,279.5L182.9,278.4L182.1,277.8L180.1,277.4L179.1,277.6L177.7,278.3L176.8,279.2L176.6,280.5L177.2,283.1L177.7,284.0Z" fill="#1f8a8c"/>
<path d="M179.9,284.3L180.8,284.1L181.4,283.8L182.7,282.1L182.9,281.3L182.7,279.8L181.6,281.2L181.0,281.6L180.1,281.7L179.2,281.4L178.5,280.9L178.1,280.2L177.9,279.2L177.6,279.6L177.4,280.5L177.9,282.8L178.3,283.4L179.0,283.9Z" fill="#3cbfbc" opacity="0.75"/>
<path d="M188.3,276.3L187.1,276.7L186.1,278.0L186.0,279.0L186.3,281.1L186.9,282.2L188.3,283.6L189.3,284.0L190.5,283.9L191.6,283.3L193.4,281.0L193.6,280.0L193.5,277.9L192.8,276.8L191.7,276.1Z" fill="#1f8a8c"/>
<path d="M186.9,278.3L186.8,279.0L187.1,280.9L187.5,281.7L188.8,282.9L189.4,283.2L190.3,283.1L191.0,282.7L192.7,280.6L192.8,280.0L192.7,278.3L191.2,280.1L190.5,280.5L189.6,280.6L189.0,280.3L187.7,279.1L187.3,278.3L187.2,277.9Z" fill="#3cbfbc" opacity="0.75"/>
<path d="M197.8,275.3L196.8,275.9L196.2,276.9L196.0,277.9L196.3,280.5L196.9,281.4L198.8,283.2L200.0,283.5L201.0,283.3L201.9,282.7L203.6,280.7L203.8,277.4L203.7,276.4L202.8,275.2L201.6,274.7L200.1,274.6Z" fill="#1f8a8c"/>
<path d="M196.9,277.2L196.8,277.9L197.1,280.3L197.5,280.9L199.2,282.5L200.0,282.7L200.7,282.5L201.3,282.1L202.8,280.4L203.0,277.4L203.0,277.3L203.0,277.3L201.5,279.1L200.9,279.5L200.2,279.6L199.4,279.4L197.7,277.9L197.3,277.2L197.2,276.7Z" fill="#3cbfbc" opacity="0.75"/>
<path d="M208.8,274.8L207.4,275.4L206.6,276.4L206.3,277.4L206.4,280.5L206.8,281.4L208.7,283.3L209.6,283.7L210.9,283.7L212.0,283.1L213.7,281.2L214.1,277.0L213.6,275.8L212.6,275.1L211.3,274.7Z" fill="#1f8a8c"/>
<path d="M207.3,276.7L207.1,277.5L207.2,280.3L207.5,280.9L209.1,282.6L209.8,282.9L210.6,282.9L211.5,282.5L212.9,280.8L213.3,277.1L213.2,276.9L213.1,277.7L211.7,279.4L210.8,279.8L210.0,279.8L209.3,279.5L207.7,277.8L207.4,277.2L207.4,276.6Z" fill="#3cbfbc" opacity="0.75"/>
<path d="M219.8,275.8L218.3,275.9L217.1,276.9L216.7,277.8L216.4,281.0L216.9,282.2L218.5,284.0L219.4,284.5L220.4,284.7L221.8,284.1L223.7,282.3L224.1,281.3L224.5,278.6L224.1,277.4L223.1,276.6Z" fill="#1f8a8c"/>
<path d="M217.5,278.0L217.2,280.8L217.6,281.8L219.0,283.4L219.6,283.8L220.3,283.9L221.4,283.5L223.0,281.9L223.3,281.1L223.7,278.7L223.5,278.2L223.2,278.8L221.6,280.4L220.5,280.8L219.8,280.7L219.2,280.3L217.8,278.7L217.5,278.0Z" fill="#3cbfbc" opacity="0.75"/>
<path d="M228.3,285.1L229.5,286.0L230.9,286.2L232.1,285.7L233.7,284.1L234.2,283.2L234.8,280.3L234.6,279.3L233.9,278.3L232.3,277.5L229.5,277.4L228.3,277.7L227.5,278.4L227.0,279.3L226.6,282.2L226.9,283.1Z" fill="#1f8a8c"/>
<path d="M229.8,285.3L230.8,285.4L231.6,285.0L233.1,283.6L233.5,282.9L234.0,280.3L233.9,279.6L233.8,279.4L233.7,279.9L233.3,280.6L231.8,282.0L231.0,282.4L230.0,282.3L229.1,281.6L227.9,279.8L227.8,279.6L227.4,282.1L227.7,282.8L228.9,284.6Z" fill="#3cbfbc" opacity="0.75"/>
<path d="M240.4,279.0L238.9,279.1L237.8,279.9L237.3,280.8L236.7,283.6L237.0,284.8L238.5,287.3L239.3,287.9L240.5,288.1L242.0,287.6L243.5,286.0L244.5,281.9L244.1,280.7L243.4,279.9Z" fill="#1f8a8c"/>
<path d="M237.6,283.6L237.7,284.5L239.1,286.7L239.7,287.1L240.5,287.3L241.5,286.9L242.8,285.6L243.7,281.9L243.4,281.1L243.3,281.0L243.0,282.4L241.7,283.8L240.7,284.2L239.9,284.0L239.3,283.6L238.0,281.5Z" fill="#3cbfbc" opacity="0.75"/>
<path d="M247.4,288.3L248.5,289.3L249.7,289.5L250.9,289.2L251.9,288.2L253.0,283.6L252.7,282.4L251.9,281.4L251.0,281.0L249.3,280.9L248.3,281.1L247.4,281.9L247.0,282.8L246.3,285.7L246.5,286.8Z" fill="#1f8a8c"/>
<path d="M248.8,288.5L249.7,288.7L250.5,288.5L251.2,287.8L252.2,283.6L252.0,282.7L251.9,282.6L251.4,284.8L250.7,285.5L249.9,285.7L249.0,285.6L248.2,284.8L247.6,283.8L247.1,285.8L247.2,286.5L248.0,287.8Z" fill="#3cbfbc" opacity="0.75"/>
<path d="M259.4,290.4L260.1,285.9L259.3,284.9L255.7,283.4L254.6,288.4L256.9,292.2Z" fill="#1f8a8c"/>
<path d="M259.3,286.1L259.1,285.8L258.8,287.2L257.3,288.3L255.9,286.0L255.4,288.3L257.1,291.1L258.6,289.9Z" fill="#3cbfbc" opacity="0.75"/>
<path d="M262.4,287.7L262.2,288.9L262.8,288.1Z" fill="#1f8a8c"/>
<path d="M159.2,290.7L162.0,291.3L160.1,289.9Z" fill="#1f8a8c"/>
<path d="M171.7,292.3L171.3,290.9L168.4,289.0L165.5,291.9L171.2,293.4Z" fill="#1f8a8c"/>
<path d="M170.6,291.4L170.4,291.3L167.9,290.6L167.0,291.5L170.7,292.5L170.8,292.3Z" fill="#3cbfbc" opacity="0.75"/>
<path d="M179.7,290.8L180.0,290.2L179.6,288.4L176.6,286.3L173.7,290.4L173.9,291.1Z" fill="#1f8a8c"/>
<path d="M179.2,290.0L178.9,288.9L178.9,288.9L175.6,289.0L174.8,290.2Z" fill="#3cbfbc" opacity="0.75"/>
<path d="M182.4,289.2L189.0,289.2L188.8,287.6L185.3,284.2L182.1,288.0Z" fill="#1f8a8c"/>
<path d="M188.1,288.4L188.1,288.0L187.2,287.1L183.9,287.1L183.0,288.2L183.0,288.4Z" fill="#3cbfbc" opacity="0.75"/>
<path d="M191.5,289.0L198.6,286.8L195.0,283.1L191.3,287.4Z" fill="#1f8a8c"/>
<path d="M197.1,286.4L196.0,285.3L193.6,286.0L192.1,287.7L192.2,288.0Z" fill="#3cbfbc" opacity="0.75"/>
<path d="M205.0,283.1L201.2,286.9L201.2,287.3L202.5,289.2L208.7,287.6L208.7,287.1Z" fill="#1f8a8c"/>
<path d="M202.8,288.3L207.6,287.0L206.4,285.7L203.0,286.6L202.9,286.4L202.1,287.2Z" fill="#3cbfbc" opacity="0.75"/>
<path d="M214.9,283.8L211.2,287.2L211.1,288.2L212.8,290.6L218.0,287.3Z" fill="#1f8a8c"/>
<path d="M212.0,287.6L212.0,288.0L213.0,289.5L216.8,287.1L215.8,285.9L213.2,287.6L212.7,286.9Z" fill="#3cbfbc" opacity="0.75"/>
<path d="M223.9,291.2L228.0,289.1L224.9,284.7L221.7,287.8Z" fill="#1f8a8c"/>
<path d="M226.9,288.8L226.0,287.6L224.4,288.4L223.5,287.1L222.7,287.9L224.2,290.2Z" fill="#3cbfbc" opacity="0.75"/>
<path d="M231.5,289.7L233.6,292.6L238.1,291.5L235.0,286.3Z" fill="#1f8a8c"/>
<path d="M233.9,291.7L236.8,291.0L236.0,289.5L234.1,290.0L233.4,289.0L232.5,289.8Z" fill="#3cbfbc" opacity="0.75"/>
<path d="M241.1,292.2L242.1,293.6L246.6,291.8L244.6,288.6Z" fill="#1f8a8c"/>
<path d="M242.4,292.6L245.4,291.4L244.9,290.5L243.2,291.2L242.2,292.3Z" fill="#3cbfbc" opacity="0.75"/>
<path d="M255.2,294.2L253.0,290.7L250.9,293.0L251.5,294.7Z" fill="#1f8a8c"/>
<path d="M253.4,292.9L252.2,293.0L252.1,292.8L251.8,293.1L252.0,293.8L253.9,293.6Z" fill="#3cbfbc" opacity="0.75"/>
<path d="M259.0,293.8L257.7,294.8L257.6,295.1L258.1,295.9Z" fill="#1f8a8c"/>
<path d="M181.8,292.2L182.4,295.3L186.2,297.1L189.7,293.2L189.4,291.7L182.1,291.7Z" fill="#1f8a8c"/>
<path d="M183.1,294.8L186.0,296.2L188.8,292.9L188.7,292.5L188.1,292.5L186.2,294.6L183.3,293.2L183.2,292.5L182.6,292.5Z" fill="#3cbfbc" opacity="0.75"/>
<path d="M197.3,289.8L195.2,290.7L194.4,291.7L194.3,293.0L194.6,293.9L195.3,294.7L196.8,295.6L197.8,295.8L199.0,295.4L199.8,294.7L200.2,293.8L200.4,292.2L200.1,291.2L199.3,290.2L198.3,289.8Z" fill="#1f8a8c"/>
<path d="M195.2,292.0L195.1,292.9L195.3,293.5L195.8,294.1L197.0,294.9L197.7,295.0L198.6,294.7L199.1,294.3L199.4,293.6L199.6,292.2L199.5,292.0L199.3,292.4L198.8,292.9L197.9,293.1L197.2,293.0L196.0,292.3L195.5,291.7L195.5,291.6Z" fill="#3cbfbc" opacity="0.75"/>
<path d="M205.3,291.0L204.0,291.8L203.4,292.9L203.5,294.4L204.1,295.4L205.2,296.0L208.5,296.7L209.8,296.4L210.6,295.8L211.3,294.7L211.3,293.2L211.0,292.3L210.0,291.1L209.2,290.5L208.4,290.4Z" fill="#1f8a8c"/>
<path d="M204.2,293.1L204.3,294.1L204.7,294.8L205.5,295.3L208.5,295.9L209.5,295.7L210.0,295.3L210.5,294.5L210.5,293.3L210.4,293.0L210.2,293.3L209.7,293.7L208.7,293.9L205.7,293.3L204.9,292.9L204.6,292.4Z" fill="#3cbfbc" opacity="0.75"/>
<path d="M213.8,292.9L214.0,296.4L221.6,295.0L222.1,293.0L219.6,289.2Z" fill="#1f8a8c"/>
<path d="M214.7,295.4L221.0,294.3L221.2,293.2L220.6,292.2L214.9,293.3L214.9,293.1L214.6,293.3Z" fill="#3cbfbc" opacity="0.75"/>
<path d="M231.5,295.0L231.7,294.3L229.5,291.2L224.5,293.7L224.0,295.7L226.5,298.8Z" fill="#1f8a8c"/>
<path d="M230.8,294.4L229.9,293.1L226.8,295.4L225.7,294.0L225.2,294.2L224.9,295.5L226.6,297.7L230.8,294.5Z" fill="#3cbfbc" opacity="0.75"/>
<path d="M237.8,300.6L240.9,298.8L240.4,295.6L239.2,293.8L234.1,295.1L234.0,295.5Z" fill="#1f8a8c"/>
<path d="M238.0,299.5L240.0,298.3L239.8,296.6L238.2,297.5L236.5,295.3L235.1,295.6Z" fill="#3cbfbc" opacity="0.75"/>
<path d="M248.5,293.7L243.0,295.9L243.4,298.6L244.5,299.2L249.1,296.6L249.4,296.0Z" fill="#1f8a8c"/>
<path d="M243.9,296.4L244.2,298.1L244.5,298.3L248.5,296.1L248.5,296.0L248.1,294.9L244.7,296.8L244.4,296.6L244.3,296.2Z" fill="#3cbfbc" opacity="0.75"/>
<path d="M173.5,294.3L176.5,297.5L177.0,298.5L180.0,295.8L179.4,293.3L173.8,293.6Z" fill="#1f8a8c"/>
<path d="M177.1,296.9L177.2,297.0L177.2,297.1L177.2,297.1L177.3,297.2L179.1,295.5L178.9,294.6L177.5,295.9L177.4,295.9L177.4,295.8L177.4,295.7L177.3,295.7L176.0,294.3L174.7,294.4Z" fill="#3cbfbc" opacity="0.75"/>
<path d="M253.5,299.8L256.7,298.3L255.6,296.7L251.6,297.2Z" fill="#1f8a8c"/>
<path d="M255.5,298.0L255.3,297.6L254.0,298.3L253.6,297.7L253.0,297.8L253.8,298.8Z" fill="#3cbfbc" opacity="0.75"/>
<path d="M178.5,303.0L179.3,304.1L180.2,304.6L181.7,304.8L182.7,304.6L184.6,303.2L185.2,302.4L185.5,301.4L185.3,300.1L184.5,299.1L183.2,298.5L182.2,298.2L181.2,298.4L180.3,298.9L178.7,300.5L178.3,301.7Z" fill="#1f8a8c"/>
<path d="M179.8,303.5L180.4,303.8L181.7,304.0L182.4,303.9L184.0,302.6L184.5,302.0L184.7,301.4L184.5,300.5L184.4,300.3L184.2,300.5L182.6,301.8L181.9,301.9L180.6,301.7L180.0,301.4L179.6,300.7L179.4,300.9L179.1,301.7L179.3,302.7Z" fill="#3cbfbc" opacity="0.75"/>
<path d="M188.0,300.3L188.3,301.3L189.2,302.2L193.4,303.9L194.4,304.1L195.3,303.9L196.3,303.1L196.8,302.2L197.1,300.3L196.8,299.0L196.1,298.3L192.9,296.2L191.6,296.0L190.2,296.5L188.6,298.2L188.1,299.2Z" fill="#1f8a8c"/>
<path d="M189.0,300.9L189.6,301.6L193.6,303.1L194.3,303.3L195.0,303.1L195.7,302.6L196.0,301.9L196.3,300.3L196.1,299.5L195.9,299.8L195.2,300.4L194.5,300.5L193.8,300.4L189.8,298.8L189.5,298.5L189.2,298.7L188.9,299.4L188.8,300.2Z" fill="#3cbfbc" opacity="0.75"/>
<path d="M202.8,298.1L201.0,298.4L199.9,299.7L199.4,302.5L200.1,304.1L201.1,304.7L208.0,307.0L209.2,307.0L210.3,306.4L211.1,305.3L211.4,304.3L211.2,301.5L210.6,300.2L209.4,299.4Z" fill="#1f8a8c"/>
<path d="M200.6,300.1L200.2,302.4L200.7,303.5L201.5,304.0L208.1,306.2L209.0,306.2L209.8,305.8L210.4,304.9L210.6,304.2L210.5,302.1L210.0,302.7L209.2,303.2L208.3,303.2L201.7,300.9L200.9,300.4L200.7,300.0Z" fill="#3cbfbc" opacity="0.75"/>
<path d="M215.8,298.6L214.5,299.3L213.8,300.8L214.0,303.2L215.2,304.4L222.3,305.5L223.6,305.0L224.8,303.4L225.2,302.2L225.0,301.0L223.2,298.6L222.4,298.0L220.9,297.7Z" fill="#1f8a8c"/>
<path d="M214.6,300.9L214.8,302.8L215.6,303.6L222.2,304.7L223.1,304.3L224.1,303.1L224.3,302.2L224.2,301.3L223.9,301.0L223.3,301.7L222.4,302.1L215.8,301.0L215.0,300.2L215.0,300.1Z" fill="#3cbfbc" opacity="0.75"/>
<path d="M234.7,304.5L236.0,302.3L232.4,297.5L227.6,301.1L227.7,302.5Z" fill="#1f8a8c"/>
<path d="M235.0,302.4L234.3,301.4L230.1,300.2L228.4,301.5L228.4,301.9L234.4,303.5Z" fill="#3cbfbc" opacity="0.75"/>
<path d="M238.0,303.9L237.6,305.1L238.0,306.5L238.9,307.4L240.5,308.1L241.5,308.0L242.6,307.4L244.0,305.5L244.3,304.5L244.2,303.5L243.8,302.6L243.0,302.0L242.1,301.6L240.4,302.0L238.8,302.9Z" fill="#1f8a8c"/>
<path d="M238.5,305.1L238.7,306.1L239.4,306.7L240.6,307.3L241.3,307.2L242.1,306.8L243.3,305.1L243.5,304.4L243.4,303.7L243.3,303.4L242.3,304.7L241.5,305.2L240.8,305.2L239.6,304.7L238.9,304.1L238.9,304.0L238.7,304.3Z" fill="#3cbfbc" opacity="0.75"/>
<path d="M246.2,301.1L247.2,303.4L249.2,304.2L251.5,303.6L251.8,301.7L249.8,299.1Z" fill="#1f8a8c"/>
<path d="M247.8,302.8L249.3,303.4L250.8,302.9L250.9,301.9L250.7,301.7L249.5,302.0L248.0,301.4L247.9,301.1L247.2,301.5Z" fill="#3cbfbc" opacity="0.75"/>
<path d="M179.8,307.1L181.9,315.4L182.2,316.6L184.9,314.8L182.1,307.4Z" fill="#1f8a8c"/>
<path d="M182.6,315.2L182.7,315.3L183.9,314.5L183.0,312.2L182.9,312.3L182.8,312.1L182.5,310.9L181.5,308.1L180.9,308.0Z" fill="#3cbfbc" opacity="0.75"/>
<path d="M190.5,314.3L192.0,313.9L193.0,312.8L194.0,309.0L193.8,307.7L193.1,306.7L192.3,306.2L188.4,304.7L186.7,304.8L185.4,306.0L184.9,307.4L185.1,308.3L186.7,312.5L187.2,313.4L188.0,314.0Z" fill="#1f8a8c"/>
<path d="M191.6,313.2L192.3,312.4L193.1,308.9L193.1,308.0L192.8,307.7L192.5,309.0L191.8,309.9L190.7,310.1L188.5,309.9L188.0,309.5L187.6,308.8L186.5,306.0L186.0,306.4L185.7,307.4L185.9,308.1L187.4,312.2L187.8,312.8L188.3,313.2L190.5,313.5Z" fill="#3cbfbc" opacity="0.75"/>
<path d="M199.9,307.0L198.2,307.0L196.9,308.1L195.7,312.6L195.9,314.0L197.1,315.2L203.1,317.6L204.1,317.8L205.2,317.6L207.9,315.5L208.5,314.7L208.8,311.8L208.5,310.6L207.2,309.5Z" fill="#1f8a8c"/>
<path d="M196.5,312.6L196.7,313.6L197.5,314.6L203.3,316.9L204.1,317.0L204.8,316.8L207.3,315.0L207.8,314.4L207.9,311.9L207.7,311.1L207.6,311.0L207.5,311.1L205.0,313.0L204.3,313.1L203.5,313.0L197.7,310.7L197.2,310.1Z" fill="#3cbfbc" opacity="0.75"/>
<path d="M211.2,313.2L211.6,314.4L212.4,315.4L217.9,318.2L218.9,318.5L219.9,318.3L220.8,317.8L222.9,315.5L223.5,314.2L222.7,309.7L221.8,308.4L220.6,307.9L214.6,306.9L213.8,307.0L212.9,307.4L211.6,309.0L211.3,310.1Z" fill="#1f8a8c"/>
<path d="M212.3,314.0L212.9,314.7L218.2,317.4L218.9,317.7L219.6,317.6L220.3,317.2L222.2,315.1L222.6,314.1L222.2,311.2L220.5,313.0L219.8,313.4L219.1,313.5L218.4,313.3L213.1,310.6L212.5,309.9L212.4,309.4L212.3,309.4L212.1,310.2L212.1,313.1Z" fill="#3cbfbc" opacity="0.75"/>
<path d="M225.6,306.5L225.1,307.4L225.0,308.4L225.7,312.0L226.1,313.0L226.8,313.7L227.8,314.1L229.4,314.2L230.6,313.7L231.3,313.0L233.1,309.3L233.1,308.0L232.7,307.1L231.5,306.2L228.1,305.2L226.7,305.6Z" fill="#1f8a8c"/>
<path d="M225.9,307.6L225.8,308.4L226.5,311.8L226.8,312.5L227.3,313.0L228.0,313.3L229.3,313.4L230.1,313.0L230.6,312.5L232.3,309.1L232.3,308.2L232.1,307.6L231.8,307.4L230.8,309.5L230.3,310.0L229.5,310.3L228.2,310.2L227.5,310.0L227.0,309.5L226.7,308.7L226.3,306.9L226.3,307.0Z" fill="#3cbfbc" opacity="0.75"/>
<path d="M238.6,310.1L237.2,309.8L235.8,310.3L235.1,311.0L233.7,313.9L233.5,314.9L233.8,316.1L235.0,317.4L235.9,317.9L237.1,318.1L238.3,317.7L241.1,314.1L241.3,313.1L240.9,311.8L240.2,311.1Z" fill="#1f8a8c"/>
<path d="M234.4,314.2L234.3,314.9L234.5,315.7L235.5,316.8L236.1,317.2L237.0,317.3L237.8,317.0L240.4,313.8L240.5,313.1L240.2,312.2L239.9,311.9L238.0,314.2L237.2,314.5L236.3,314.4L235.7,314.0L234.9,313.1Z" fill="#3cbfbc" opacity="0.75"/>
<path d="M243.4,310.8L244.1,312.6L248.3,313.3L248.7,312.9L248.0,306.4L246.7,305.9Z" fill="#1f8a8c"/>
<path d="M244.7,311.9L247.8,312.4L247.6,310.0L245.1,309.6L244.3,310.9Z" fill="#3cbfbc" opacity="0.75"/>
<ellipse cx="179.7" cy="324" rx="1.8" ry="3.8" transform="rotate(12 179.7 324)" fill="#1a7e81"/>
<ellipse cx="176.8" cy="317.4" rx="1.6" ry="3" transform="rotate(15 176.8 317.4)" fill="#1a7e81"/>
<ellipse cx="179.7" cy="332" rx="1.5" ry="2.2" transform="rotate(15 179.7 332)" fill="#1a7e81"/>
<ellipse cx="174.7" cy="329" rx="1.4" ry="2.4" transform="rotate(20 174.7 329)" fill="#1a7e81"/>
<ellipse cx="146.6" cy="355" rx="0.8" ry="1.8" transform="rotate(25 146.6 355)" fill="#1a7e81"/>
<ellipse cx="169" cy="326" rx="1.5" ry="3" transform="rotate(22 169 326)" fill="#1a7e81"/>
<ellipse cx="172" cy="318" rx="1.2" ry="3" transform="rotate(20 172 318)" fill="#1a7e81"/>
<ellipse cx="155.5" cy="344.5" rx="1.4" ry="2.6" transform="rotate(30 155.5 344.5)" fill="#1a7e81"/>
<ellipse cx="166" cy="331" rx="1.2" ry="2.4" transform="rotate(25 166 331)" fill="#1a7e81"/>
<ellipse cx="160" cy="340" rx="0.9" ry="2" transform="rotate(28 160 340)" fill="#1a7e81"/>
<ellipse cx="198" cy="291.4" rx="1.1" ry="0.7" fill="#e8f6f6" opacity="0.9"/>
<ellipse cx="222" cy="292" rx="1.1" ry="0.7" fill="#e8f6f6" opacity="0.9"/>
<ellipse cx="230.8" cy="299.4" rx="1.1" ry="0.7" fill="#e8f6f6" opacity="0.9"/>
<ellipse cx="220" cy="306.7" rx="1.1" ry="0.7" fill="#e8f6f6" opacity="0.9"/>
<ellipse cx="241.5" cy="307.4" rx="1.1" ry="0.7" fill="#e8f6f6" opacity="0.9"/>
<ellipse cx="205.5" cy="302.4" rx="1.1" ry="0.7" fill="#e8f6f6" opacity="0.9"/>
<ellipse cx="236" cy="297.4" rx="1.1" ry="0.7" fill="#e8f6f6" opacity="0.9"/>
<ellipse cx="246.4" cy="318.2" rx="1.1" ry="0.7" fill="#e8f6f6" opacity="0.9"/>
<ellipse cx="250.4" cy="301" rx="1.1" ry="0.7" fill="#e8f6f6" opacity="0.9"/>
<clipPath id="silc"><path d="M66.80,256.00C66.82,255.40 66.58,254.33 66.90,252.40C67.22,250.47 67.85,247.07 68.70,244.40C69.55,241.73 70.55,239.07 72.00,236.40C73.45,233.73 75.17,230.97 77.40,228.40C79.63,225.83 82.52,223.23 85.40,221.00C88.28,218.77 91.37,216.77 94.70,215.00C98.03,213.23 101.62,211.78 105.40,210.40C109.18,209.02 113.40,207.67 117.40,206.70C121.40,205.73 125.62,205.17 129.40,204.60C133.18,204.03 136.67,203.65 140.10,203.30C143.53,202.95 146.27,202.68 150.00,202.50C153.73,202.32 158.33,202.12 162.50,202.20C166.67,202.28 171.53,202.67 175.00,203.00C178.47,203.33 180.63,203.77 183.30,204.20C185.97,204.63 188.22,205.07 191.00,205.60C193.78,206.13 197.17,206.92 200.00,207.40C202.83,207.88 205.22,208.23 208.00,208.50C210.78,208.77 213.87,208.92 216.70,209.00C219.53,209.08 222.23,209.05 225.00,209.00C227.77,208.95 230.63,208.90 233.30,208.70C235.97,208.50 238.22,208.15 241.00,207.80C243.78,207.45 247.17,207.10 250.00,206.60C252.83,206.10 255.22,205.43 258.00,204.80C260.78,204.17 263.87,203.40 266.70,202.80C269.53,202.20 271.95,201.67 275.00,201.20C278.05,200.73 281.55,200.15 285.00,200.00C288.45,199.85 292.13,199.97 295.70,200.30C299.27,200.63 302.85,201.20 306.40,202.00C309.95,202.80 313.45,203.87 317.00,205.10C320.55,206.33 324.13,207.75 327.70,209.40C331.27,211.05 335.28,213.12 338.40,215.00C341.52,216.88 343.95,218.75 346.40,220.70C348.85,222.65 351.10,224.58 353.10,226.70C355.10,228.82 356.85,231.07 358.40,233.40C359.95,235.73 361.37,238.25 362.40,240.70C363.43,243.15 364.17,246.12 364.60,248.10C365.03,250.08 364.93,251.85 365.00,252.60L364.60,256.60C364.27,257.58 363.45,260.75 362.60,262.50C361.75,264.25 360.87,265.48 359.50,267.10C358.13,268.72 356.27,270.58 354.40,272.20C352.53,273.82 350.52,275.35 348.30,276.80C346.08,278.25 343.67,279.62 341.10,280.90C338.53,282.18 335.65,283.38 332.90,284.50C330.15,285.62 327.35,286.65 324.60,287.60C321.85,288.55 319.13,289.47 316.40,290.20C313.67,290.93 310.93,291.50 308.20,292.00C305.47,292.50 302.57,292.87 300.00,293.20C297.43,293.53 295.85,293.82 292.80,294.00C289.75,294.18 285.40,294.35 281.70,294.30C278.00,294.25 274.32,294.05 270.60,293.70C266.88,293.35 263.12,292.85 259.40,292.20C255.68,291.55 252.00,290.77 248.30,289.80C244.60,288.83 240.90,287.52 237.20,286.40C233.50,285.28 229.80,284.02 226.10,283.10C222.40,282.18 218.05,281.30 215.00,280.90C211.95,280.50 210.85,280.67 207.80,280.70C204.75,280.73 200.40,280.85 196.70,281.10C193.00,281.35 189.32,281.70 185.60,282.20C181.88,282.70 178.12,283.27 174.40,284.10C170.68,284.93 167.00,286.12 163.30,287.20C159.60,288.28 155.90,289.53 152.20,290.60C148.50,291.67 144.47,292.80 141.10,293.60C137.73,294.40 134.92,294.97 132.00,295.40C129.08,295.83 126.37,296.07 123.60,296.20C120.83,296.33 118.13,296.37 115.40,296.20C112.67,296.03 109.77,295.68 107.20,295.20C104.63,294.72 102.40,294.07 100.00,293.30C97.60,292.53 95.03,291.65 92.80,290.60C90.57,289.55 88.65,288.38 86.60,287.00C84.55,285.62 82.38,283.93 80.50,282.30C78.62,280.67 76.85,278.98 75.30,277.20C73.75,275.42 72.30,273.57 71.20,271.60C70.10,269.63 69.37,267.33 68.70,265.40C68.03,263.47 67.45,260.90 67.20,260.00Z"/></clipPath>
<path d="M66.80,256.00C66.82,255.40 66.58,254.33 66.90,252.40C67.22,250.47 67.85,247.07 68.70,244.40C69.55,241.73 70.55,239.07 72.00,236.40C73.45,233.73 75.17,230.97 77.40,228.40C79.63,225.83 82.52,223.23 85.40,221.00C88.28,218.77 91.37,216.77 94.70,215.00C98.03,213.23 101.62,211.78 105.40,210.40C109.18,209.02 113.40,207.67 117.40,206.70C121.40,205.73 125.62,205.17 129.40,204.60C133.18,204.03 136.67,203.65 140.10,203.30C143.53,202.95 146.27,202.68 150.00,202.50C153.73,202.32 158.33,202.12 162.50,202.20C166.67,202.28 171.53,202.67 175.00,203.00C178.47,203.33 180.63,203.77 183.30,204.20C185.97,204.63 188.22,205.07 191.00,205.60C193.78,206.13 197.17,206.92 200.00,207.40C202.83,207.88 205.22,208.23 208.00,208.50C210.78,208.77 213.87,208.92 216.70,209.00C219.53,209.08 222.23,209.05 225.00,209.00C227.77,208.95 230.63,208.90 233.30,208.70C235.97,208.50 238.22,208.15 241.00,207.80C243.78,207.45 247.17,207.10 250.00,206.60C252.83,206.10 255.22,205.43 258.00,204.80C260.78,204.17 263.87,203.40 266.70,202.80C269.53,202.20 271.95,201.67 275.00,201.20C278.05,200.73 281.55,200.15 285.00,200.00C288.45,199.85 292.13,199.97 295.70,200.30C299.27,200.63 302.85,201.20 306.40,202.00C309.95,202.80 313.45,203.87 317.00,205.10C320.55,206.33 324.13,207.75 327.70,209.40C331.27,211.05 335.28,213.12 338.40,215.00C341.52,216.88 343.95,218.75 346.40,220.70C348.85,222.65 351.10,224.58 353.10,226.70C355.10,228.82 356.85,231.07 358.40,233.40C359.95,235.73 361.37,238.25 362.40,240.70C363.43,243.15 364.17,246.12 364.60,248.10C365.03,250.08 364.93,251.85 365.00,252.60L364.60,256.60C364.27,257.58 363.45,260.75 362.60,262.50C361.75,264.25 360.87,265.48 359.50,267.10C358.13,268.72 356.27,270.58 354.40,272.20C352.53,273.82 350.52,275.35 348.30,276.80C346.08,278.25 343.67,279.62 341.10,280.90C338.53,282.18 335.65,283.38 332.90,284.50C330.15,285.62 327.35,286.65 324.60,287.60C321.85,288.55 319.13,289.47 316.40,290.20C313.67,290.93 310.93,291.50 308.20,292.00C305.47,292.50 302.57,292.87 300.00,293.20C297.43,293.53 295.85,293.82 292.80,294.00C289.75,294.18 285.40,294.35 281.70,294.30C278.00,294.25 274.32,294.05 270.60,293.70C266.88,293.35 263.12,292.85 259.40,292.20C255.68,291.55 252.00,290.77 248.30,289.80C244.60,288.83 240.90,287.52 237.20,286.40C233.50,285.28 229.80,284.02 226.10,283.10C222.40,282.18 218.05,281.30 215.00,280.90C211.95,280.50 210.85,280.67 207.80,280.70C204.75,280.73 200.40,280.85 196.70,281.10C193.00,281.35 189.32,281.70 185.60,282.20C181.88,282.70 178.12,283.27 174.40,284.10C170.68,284.93 167.00,286.12 163.30,287.20C159.60,288.28 155.90,289.53 152.20,290.60C148.50,291.67 144.47,292.80 141.10,293.60C137.73,294.40 134.92,294.97 132.00,295.40C129.08,295.83 126.37,296.07 123.60,296.20C120.83,296.33 118.13,296.37 115.40,296.20C112.67,296.03 109.77,295.68 107.20,295.20C104.63,294.72 102.40,294.07 100.00,293.30C97.60,292.53 95.03,291.65 92.80,290.60C90.57,289.55 88.65,288.38 86.60,287.00C84.55,285.62 82.38,283.93 80.50,282.30C78.62,280.67 76.85,278.98 75.30,277.20C73.75,275.42 72.30,273.57 71.20,271.60C70.10,269.63 69.37,267.33 68.70,265.40C68.03,263.47 67.45,260.90 67.20,260.00Z" fill="url(#rimg)"/>
<g clip-path="url(#silc)" fill="none" stroke-linejoin="round"><path d="M365.00,252.60C364.93,253.27 365.00,254.95 364.60,256.60C364.20,258.25 363.45,260.75 362.60,262.50C361.75,264.25 360.87,265.48 359.50,267.10C358.13,268.72 356.27,270.58 354.40,272.20C352.53,273.82 350.52,275.35 348.30,276.80C346.08,278.25 343.67,279.62 341.10,280.90C338.53,282.18 335.65,283.38 332.90,284.50C330.15,285.62 327.35,286.65 324.60,287.60C321.85,288.55 319.13,289.47 316.40,290.20C313.67,290.93 310.93,291.50 308.20,292.00C305.47,292.50 302.57,292.87 300.00,293.20C297.43,293.53 295.85,293.82 292.80,294.00C289.75,294.18 285.40,294.35 281.70,294.30C278.00,294.25 274.32,294.05 270.60,293.70C266.88,293.35 263.12,292.85 259.40,292.20C255.68,291.55 252.00,290.77 248.30,289.80C244.60,288.83 240.90,287.52 237.20,286.40C233.50,285.28 229.80,284.02 226.10,283.10C222.40,282.18 218.05,281.30 215.00,280.90C211.95,280.50 210.85,280.67 207.80,280.70C204.75,280.73 200.40,280.85 196.70,281.10C193.00,281.35 189.32,281.70 185.60,282.20C181.88,282.70 178.12,283.27 174.40,284.10C170.68,284.93 167.00,286.12 163.30,287.20C159.60,288.28 155.90,289.53 152.20,290.60C148.50,291.67 144.47,292.80 141.10,293.60C137.73,294.40 134.92,294.97 132.00,295.40C129.08,295.83 126.37,296.07 123.60,296.20C120.83,296.33 118.13,296.37 115.40,296.20C112.67,296.03 109.77,295.68 107.20,295.20C104.63,294.72 102.40,294.07 100.00,293.30C97.60,292.53 95.03,291.65 92.80,290.60C90.57,289.55 88.65,288.38 86.60,287.00C84.55,285.62 82.38,283.93 80.50,282.30C78.62,280.67 76.85,278.98 75.30,277.20C73.75,275.42 72.30,273.57 71.20,271.60C70.10,269.63 69.37,267.33 68.70,265.40C68.03,263.47 67.52,261.57 67.20,260.00C66.88,258.43 66.87,256.67 66.80,256.00" stroke="#146e72" stroke-opacity="0.10" stroke-width="9"/><path d="M365.00,252.60C364.93,253.27 365.00,254.95 364.60,256.60C364.20,258.25 363.45,260.75 362.60,262.50C361.75,264.25 360.87,265.48 359.50,267.10C358.13,268.72 356.27,270.58 354.40,272.20C352.53,273.82 350.52,275.35 348.30,276.80C346.08,278.25 343.67,279.62 341.10,280.90C338.53,282.18 335.65,283.38 332.90,284.50C330.15,285.62 327.35,286.65 324.60,287.60C321.85,288.55 319.13,289.47 316.40,290.20C313.67,290.93 310.93,291.50 308.20,292.00C305.47,292.50 302.57,292.87 300.00,293.20C297.43,293.53 295.85,293.82 292.80,294.00C289.75,294.18 285.40,294.35 281.70,294.30C278.00,294.25 274.32,294.05 270.60,293.70C266.88,293.35 263.12,292.85 259.40,292.20C255.68,291.55 252.00,290.77 248.30,289.80C244.60,288.83 240.90,287.52 237.20,286.40C233.50,285.28 229.80,284.02 226.10,283.10C222.40,282.18 218.05,281.30 215.00,280.90C211.95,280.50 210.85,280.67 207.80,280.70C204.75,280.73 200.40,280.85 196.70,281.10C193.00,281.35 189.32,281.70 185.60,282.20C181.88,282.70 178.12,283.27 174.40,284.10C170.68,284.93 167.00,286.12 163.30,287.20C159.60,288.28 155.90,289.53 152.20,290.60C148.50,291.67 144.47,292.80 141.10,293.60C137.73,294.40 134.92,294.97 132.00,295.40C129.08,295.83 126.37,296.07 123.60,296.20C120.83,296.33 118.13,296.37 115.40,296.20C112.67,296.03 109.77,295.68 107.20,295.20C104.63,294.72 102.40,294.07 100.00,293.30C97.60,292.53 95.03,291.65 92.80,290.60C90.57,289.55 88.65,288.38 86.60,287.00C84.55,285.62 82.38,283.93 80.50,282.30C78.62,280.67 76.85,278.98 75.30,277.20C73.75,275.42 72.30,273.57 71.20,271.60C70.10,269.63 69.37,267.33 68.70,265.40C68.03,263.47 67.52,261.57 67.20,260.00C66.88,258.43 66.87,256.67 66.80,256.00" stroke="#146e72" stroke-opacity="0.30" stroke-width="4.4"/><path d="M365.00,252.60C364.93,253.27 365.00,254.95 364.60,256.60C364.20,258.25 363.45,260.75 362.60,262.50C361.75,264.25 360.87,265.48 359.50,267.10C358.13,268.72 356.27,270.58 354.40,272.20C352.53,273.82 350.52,275.35 348.30,276.80C346.08,278.25 343.67,279.62 341.10,280.90C338.53,282.18 335.65,283.38 332.90,284.50C330.15,285.62 327.35,286.65 324.60,287.60C321.85,288.55 319.13,289.47 316.40,290.20C313.67,290.93 310.93,291.50 308.20,292.00C305.47,292.50 302.57,292.87 300.00,293.20C297.43,293.53 295.85,293.82 292.80,294.00C289.75,294.18 285.40,294.35 281.70,294.30C278.00,294.25 274.32,294.05 270.60,293.70C266.88,293.35 263.12,292.85 259.40,292.20C255.68,291.55 252.00,290.77 248.30,289.80C244.60,288.83 240.90,287.52 237.20,286.40C233.50,285.28 229.80,284.02 226.10,283.10C222.40,282.18 218.05,281.30 215.00,280.90C211.95,280.50 210.85,280.67 207.80,280.70C204.75,280.73 200.40,280.85 196.70,281.10C193.00,281.35 189.32,281.70 185.60,282.20C181.88,282.70 178.12,283.27 174.40,284.10C170.68,284.93 167.00,286.12 163.30,287.20C159.60,288.28 155.90,289.53 152.20,290.60C148.50,291.67 144.47,292.80 141.10,293.60C137.73,294.40 134.92,294.97 132.00,295.40C129.08,295.83 126.37,296.07 123.60,296.20C120.83,296.33 118.13,296.37 115.40,296.20C112.67,296.03 109.77,295.68 107.20,295.20C104.63,294.72 102.40,294.07 100.00,293.30C97.60,292.53 95.03,291.65 92.80,290.60C90.57,289.55 88.65,288.38 86.60,287.00C84.55,285.62 82.38,283.93 80.50,282.30C78.62,280.67 76.85,278.98 75.30,277.20C73.75,275.42 72.30,273.57 71.20,271.60C70.10,269.63 69.37,267.33 68.70,265.40C68.03,263.47 67.52,261.57 67.20,260.00C66.88,258.43 66.87,256.67 66.80,256.00" stroke="#0f5f64" stroke-opacity="0.35" stroke-width="1.6"/></g>
<path d="M66.80,256.00C66.82,255.40 66.58,254.33 66.90,252.40C67.22,250.47 67.85,247.07 68.70,244.40C69.55,241.73 70.55,239.07 72.00,236.40C73.45,233.73 75.17,230.97 77.40,228.40C79.63,225.83 82.52,223.23 85.40,221.00C88.28,218.77 91.37,216.77 94.70,215.00C98.03,213.23 101.62,211.78 105.40,210.40C109.18,209.02 113.40,207.67 117.40,206.70C121.40,205.73 125.62,205.17 129.40,204.60C133.18,204.03 136.67,203.65 140.10,203.30C143.53,202.95 146.27,202.68 150.00,202.50C153.73,202.32 158.33,202.12 162.50,202.20C166.67,202.28 171.53,202.67 175.00,203.00C178.47,203.33 180.63,203.77 183.30,204.20C185.97,204.63 188.22,205.07 191.00,205.60C193.78,206.13 197.17,206.92 200.00,207.40C202.83,207.88 205.22,208.23 208.00,208.50C210.78,208.77 213.87,208.92 216.70,209.00C219.53,209.08 222.23,209.05 225.00,209.00C227.77,208.95 230.63,208.90 233.30,208.70C235.97,208.50 238.22,208.15 241.00,207.80C243.78,207.45 247.17,207.10 250.00,206.60C252.83,206.10 255.22,205.43 258.00,204.80C260.78,204.17 263.87,203.40 266.70,202.80C269.53,202.20 271.95,201.67 275.00,201.20C278.05,200.73 281.55,200.15 285.00,200.00C288.45,199.85 292.13,199.97 295.70,200.30C299.27,200.63 302.85,201.20 306.40,202.00C309.95,202.80 313.45,203.87 317.00,205.10C320.55,206.33 324.13,207.75 327.70,209.40C331.27,211.05 335.28,213.12 338.40,215.00C341.52,216.88 343.95,218.75 346.40,220.70C348.85,222.65 351.10,224.58 353.10,226.70C355.10,228.82 356.85,231.07 358.40,233.40C359.95,235.73 361.37,238.25 362.40,240.70C363.43,243.15 364.17,246.12 364.60,248.10C365.03,250.08 364.93,251.85 365.00,252.60L365.00,252.60C364.82,253.30 364.48,255.37 363.90,256.80C363.32,258.23 362.57,259.70 361.50,261.20C360.43,262.70 359.02,264.28 357.50,265.80C355.98,267.32 354.32,268.85 352.40,270.30C350.48,271.75 348.23,273.18 346.00,274.50C343.77,275.82 341.53,277.00 339.00,278.20C336.47,279.40 333.53,280.63 330.80,281.70C328.07,282.77 325.33,283.75 322.60,284.60C319.87,285.45 317.13,286.20 314.40,286.80C311.67,287.40 308.60,287.87 306.20,288.20C303.80,288.53 302.23,288.68 300.00,288.80C297.77,288.92 295.85,288.93 292.80,288.90C289.75,288.87 285.40,288.87 281.70,288.60C278.00,288.33 274.32,287.93 270.60,287.30C266.88,286.67 263.12,285.78 259.40,284.80C255.68,283.82 252.00,282.60 248.30,281.40C244.60,280.20 240.90,278.78 237.20,277.60C233.50,276.42 229.80,275.10 226.10,274.30C222.40,273.50 218.05,273.00 215.00,272.80C211.95,272.60 210.85,273.02 207.80,273.10C204.75,273.18 200.40,273.08 196.70,273.30C193.00,273.52 189.32,273.83 185.60,274.40C181.88,274.97 178.12,275.77 174.40,276.70C170.68,277.63 167.00,278.80 163.30,280.00C159.60,281.20 155.90,282.77 152.20,283.90C148.50,285.03 144.47,286.03 141.10,286.80C137.73,287.57 134.57,288.10 132.00,288.50C129.43,288.90 128.13,289.03 125.70,289.20C123.27,289.37 120.32,289.53 117.40,289.50C114.48,289.47 111.10,289.28 108.20,289.00C105.30,288.72 102.73,288.40 100.00,287.80C97.27,287.20 94.37,286.40 91.80,285.40C89.23,284.40 86.83,283.17 84.60,281.80C82.37,280.43 80.28,278.90 78.40,277.20C76.52,275.50 74.75,273.57 73.30,271.60C71.85,269.63 70.55,267.20 69.70,265.40C68.85,263.60 68.68,262.37 68.20,260.80C67.72,259.23 67.03,256.80 66.80,256.00Z" fill="url(#topg)"/>
<path d="M73.30,271.60C74.15,272.53 76.52,275.50 78.40,277.20C80.28,278.90 82.37,280.43 84.60,281.80C86.83,283.17 89.23,284.40 91.80,285.40C94.37,286.40 97.27,287.20 100.00,287.80C102.73,288.40 105.30,288.72 108.20,289.00C111.10,289.28 114.48,289.47 117.40,289.50C120.32,289.53 123.27,289.37 125.70,289.20C128.13,289.03 129.43,288.90 132.00,288.50C134.57,288.10 137.73,287.57 141.10,286.80C144.47,286.03 148.50,285.03 152.20,283.90C155.90,282.77 159.60,281.20 163.30,280.00C167.00,278.80 170.68,277.63 174.40,276.70C178.12,275.77 181.88,274.97 185.60,274.40C189.32,273.83 193.00,273.52 196.70,273.30C200.40,273.08 204.75,273.18 207.80,273.10C210.85,273.02 211.95,272.60 215.00,272.80C218.05,273.00 222.40,273.50 226.10,274.30C229.80,275.10 233.50,276.42 237.20,277.60C240.90,278.78 244.60,280.20 248.30,281.40C252.00,282.60 255.68,283.82 259.40,284.80C263.12,285.78 266.88,286.67 270.60,287.30C274.32,287.93 278.00,288.33 281.70,288.60C285.40,288.87 289.75,288.87 292.80,288.90C295.85,288.93 297.77,288.92 300.00,288.80C302.23,288.68 303.80,288.53 306.20,288.20C308.60,287.87 311.67,287.40 314.40,286.80C317.13,286.20 319.87,285.45 322.60,284.60C325.33,283.75 328.07,282.77 330.80,281.70C333.53,280.63 337.63,278.78 339.00,278.20" fill="none" stroke="#46bab7" stroke-opacity="0.7" stroke-width="1.1"/>
<path d="M99.3,256.4 L105.2,264.7 L155.9,246.5 L212.6,271.1 L291.4,229.3 L298.8,226.8 L306.2,230.7" fill="none" stroke="#2b9092" stroke-opacity="0.35" stroke-width="0.8"/>
<path d="M100,255.6 L105.6,263.6 L155.9,245.5 L212.6,270 L291,228.3 L298.8,225.8 L306.6,229.8" fill="none" stroke="#55c0bd" stroke-opacity="0.3" stroke-width="0.7"/>
<path d="M183.30,204.20C184.58,204.43 188.22,205.07 191.00,205.60C193.78,206.13 197.17,206.92 200.00,207.40C202.83,207.88 205.22,208.23 208.00,208.50C210.78,208.77 213.87,208.92 216.70,209.00C219.53,209.08 222.23,209.05 225.00,209.00C227.77,208.95 230.63,208.90 233.30,208.70C235.97,208.50 238.22,208.15 241.00,207.80C243.78,207.45 247.17,207.10 250.00,206.60C252.83,206.10 255.22,205.43 258.00,204.80C260.78,204.17 263.87,203.40 266.70,202.80C269.53,202.20 271.95,201.67 275.00,201.20C278.05,200.73 281.55,200.15 285.00,200.00C288.45,199.85 292.13,199.97 295.70,200.30C299.27,200.63 304.62,201.72 306.40,202.00L310.00,204.00C308.33,203.77 303.00,202.83 300.00,202.60C297.00,202.37 294.78,202.40 292.00,202.60C289.22,202.80 286.13,203.33 283.30,203.80C280.47,204.27 277.77,204.82 275.00,205.40C272.23,205.98 269.53,206.67 266.70,207.30C263.87,207.93 260.78,208.63 258.00,209.20C255.22,209.77 252.83,210.23 250.00,210.70C247.17,211.17 243.78,211.65 241.00,212.00C238.22,212.35 235.97,212.63 233.30,212.80C230.63,212.97 227.77,213.00 225.00,213.00C222.23,213.00 219.53,212.97 216.70,212.80C213.87,212.63 210.78,212.42 208.00,212.00C205.22,211.58 203.00,211.10 200.00,210.30C197.00,209.50 193.33,208.22 190.00,207.20C186.67,206.18 181.67,204.70 180.00,204.20Z" fill="#3dbab8"/>
<path d="M195,207.6 Q203,210.2 213,210.8 Q204,212.8 196.6,209.8 Z" fill="#d4f8f6"/><path d="M186,205.2 Q196,208.6 206,210.4 Q196,210 186.5,206.2 Z" fill="#6fe0dc" opacity="0.8"/>
</g>
<rect x="183.8" y="63" width="82.3" height="12.8" rx="2" fill="#ffffff"/>
<rect x="188.7" y="66" width="7.6" height="7" rx="1.6" fill="#7fb0ff"/>
<path d="M194.2,66 L196.3,66 L196.3,68 Z M188.7,71 L188.7,73 L190.8,73 Z" fill="#3a78f2"/>
<path d="M190.8,67.8 L190.8,71.2 L194.2,71.2" fill="none" stroke="#ffffff" stroke-width="1.3"/>
<path d="M202,67 L205.7,65.4 L209.4,67 L209.4,71.2 L205.7,72.9 L202,71.2 Z" fill="#6c6c6c"/>
<path d="M202,67 L205.7,68.6 L209.4,67 L205.7,65.4 Z" fill="#8c8c8c"/>
<path d="M202,67 L205.7,68.6 L205.7,72.9 L202,71.2 Z" fill="#858585"/>
<path d="M205.7,68.6 L209.4,67 L209.4,71.2 L205.7,72.9 Z" fill="#4a4a4a"/>
<path d="M210,68.2 L211.8,68.2 L210.9,69.5 Z" fill="#444"/>
<path d="M214.6,67.2 L218.1,65.5 L221.6,67.2 L221.6,71.2 L218.1,72.9 L214.6,71.2 Z M214.6,67.2 L218.1,68.9 L221.6,67.2 M218.1,68.9 L218.1,72.9" fill="none" stroke="#3c3c3c" stroke-width="0.75" stroke-linejoin="round"/>
<circle cx="221.6" cy="71" r="1.3" fill="#fff" stroke="#555" stroke-width="0.6"/><path d="M222.5,72 L223.3,73" stroke="#555" stroke-width="0.6"/>
<path d="M234.4,69 L234.4,67.2 Q234.4,66.4 233.6,66.4 L229.2,66.4 Q228.4,66.4 228.4,67.2 L228.4,71.6 Q228.4,72.4 229.2,72.4 L230.6,72.4" fill="none" stroke="#555" stroke-width="0.7"/>
<path d="M231.2,68.4 L231.6,71.6 L232.4,70.8 L233.4,71.6 Z" fill="#444"/>
<circle cx="233.6" cy="71.3" r="0.9" fill="#111"/>
<defs><radialGradient id="sph" cx="0.4" cy="0.35" r="0.7"><stop offset="0" stop-color="#9c9c9c"/><stop offset="1" stop-color="#5a5a5a"/></radialGradient></defs>
<circle cx="244.5" cy="69.6" r="3.6" fill="url(#sph)"/>
<path d="M257.2,65.8 L262,70.4 L258,73.6 L253.6,69.2 Z" fill="#5f9fff" stroke="#5f9fff" stroke-width="0.9" stroke-linejoin="round"/>
<path d="M255,68 L260,72.4 M256.2,67 L261.2,71.4" stroke="#b9d4ff" stroke-width="0.5" opacity="0.8"/>
<path d="M385.2,72 L389.1,68.8 L393,72 M386.3,71.4 L386.3,75.4 L388.1,75.4 L388.1,73.2 L390.1,73.2 L390.1,75.4 L391.9,75.4 L391.9,71.4" fill="none" stroke="#3a4560" stroke-width="0.85" stroke-linejoin="round" stroke-linecap="round"/>
<rect x="396.2" y="83" width="27.8" height="13.8" fill="#f6f6f6"/>
<rect x="397.4" y="96.8" width="25.8" height="23.6" fill="#e6e6e6"/>
<text x="410.3" y="111.3" font-size="5.3" fill="#222" text-anchor="middle" textLength="18" lengthAdjust="spacingAndGlyphs" stroke="#222" stroke-width="0.15">FRONT</text>
<g transform="translate(410.3,91.8) scale(1,0.5)"><text x="0" y="0" font-size="5.6" fill="#2a2a2a" text-anchor="middle" textLength="11" lengthAdjust="spacingAndGlyphs">TOP</text></g>
<path d="M395.5,94 L395.5,120.6" stroke="#7b7bf5" stroke-width="0.9"/>
<path d="M396.6,121.7 L427.6,121.7" stroke="#f58a8a" stroke-width="0.9"/>
<circle cx="395.2" cy="101.6" r="0.7" fill="#4fd34f"/>
<text x="393.6" y="92.4" font-size="7" fill="#4444f0" font-weight="bold" textLength="4.4" lengthAdjust="spacingAndGlyphs">Z</text>
<text x="429.6" y="124" font-size="7" fill="#f04444" textLength="4.8" lengthAdjust="spacingAndGlyphs">X</text>
<rect x="451" y="59.5" width="2" height="428" fill="#f7f8f9"/>
<rect x="453" y="58.6" width="447" height="1.6" fill="#e9e9e9"/>
<defs><linearGradient id="gst" x1="0" y1="0" x2="0" y2="1"><stop offset="0" stop-color="#dadada"/><stop offset="1" stop-color="#c6c6c6"/></linearGradient></defs><rect x="453" y="60" width="447" height="5" fill="url(#gst)"/>
<rect x="453" y="64.6" width="447" height="418.4" fill="#000000"/>
<rect x="453" y="483" width="447" height="2" fill="#e2e2e2"/>
<rect x="453" y="485" width="447" height="2" fill="#d2d2d2"/>
<ellipse cx="631.5" cy="178.5" rx="1.2" ry="2.3" fill="#fff" transform="rotate(20 631.5 178.5)"/>
<ellipse cx="711.4" cy="370.4" rx="1.7" ry="4.4" fill="#fff" transform="rotate(36 711.4 370.4)"/>
<rect x="633" y="62.4" width="86.4" height="12.8" rx="2" fill="#ffffff"/>
<text x="637" y="70.8" font-size="5.9" fill="#3c3c3c" textLength="24" lengthAdjust="spacingAndGlyphs">100.00 %</text>
<rect x="636" y="72.2" width="27" height="0.5" fill="#e2e2e2"/>
<path d="M668.1,67 L671.5,67 L669.8,64.7 Z M668.1,70.8 L671.5,70.8 L669.8,73.1 Z" fill="#3a3a3a"/>
<circle cx="681.6" cy="68.4" r="2.9" fill="none" stroke="#555" stroke-width="0.7"/>
<path d="M683.7,70.6 L685.8000000000001,73" stroke="#555" stroke-width="0.8"/>
<path d="M680.1,68.4 L683.1,68.4" stroke="#555" stroke-width="0.6"/>
<circle cx="696.9" cy="68.4" r="2.9" fill="none" stroke="#555" stroke-width="0.7"/>
<path d="M699.0,70.6 L701.1,73" stroke="#555" stroke-width="0.8"/>
<path d="M695.4,68.4 L698.4,68.4" stroke="#555" stroke-width="0.6"/>
<path d="M696.9,66.9 L696.9,69.9" stroke="#555" stroke-width="0.6"/>
<rect x="709" y="65.6" width="7.6" height="6.8" rx="1" fill="#555"/>
<path d="M710.2,66.8 L712,66.8 L710.2,68.6 Z M715.4,66.8 L713.6,66.8 L715.4,68.6 Z M710.2,71.2 L712,71.2 L710.2,69.4 Z M715.4,71.2 L713.6,71.2 L715.4,69.4 Z" fill="#fff"/>
<path d="M711,67.6 L714.6,70.4 M714.6,67.6 L711,70.4" stroke="#fff" stroke-width="0.6"/>
<rect x="889.6" y="142" width="1.8" height="226" fill="#3f7ee6"/>
<circle cx="890.5" cy="142.6" r="3.6" fill="#ffffff"/>
<circle cx="890.5" cy="367.4" r="3.6" fill="#ffffff"/>
<circle cx="890.3" cy="132.6" r="3" fill="none" stroke="#7a7a7a" stroke-width="0.6"/><path d="M888.8,132 L890.3,133.5 L891.8,132" fill="none" stroke="#8a8a8a" stroke-width="0.6"/>
<circle cx="890.5" cy="377.6" r="3" fill="none" stroke="#7a7a7a" stroke-width="0.6"/><path d="M889,378.3 L890.5,376.8 L892,378.3" fill="none" stroke="#8a8a8a" stroke-width="0.6"/>
<rect x="728.4" y="340.6" width="152.6" height="76.4" rx="3" fill="#dcdcdc"/>
<rect x="734.4" y="348.2" width="63.6" height="0.5" fill="#b4b4b4"/><rect x="811.6" y="348.2" width="63.4" height="0.5" fill="#b4b4b4"/>
<path d="M802,347 L804.8,349.6 L807.6,347" fill="none" stroke="#666" stroke-width="0.6"/>
<text x="734.6" y="363.4" font-size="6.7" fill="#4a4a4a" textLength="24" lengthAdjust="spacingAndGlyphs">Machine</text>
<text x="875" y="363.4" font-size="6.7" fill="#4f4f4f" text-anchor="end" textLength="89" lengthAdjust="spacingAndGlyphs">Anycubic Photon Mono M7 Max</text>
<text x="734.6" y="379.4" font-size="6.7" fill="#4a4a4a" textLength="22" lengthAdjust="spacingAndGlyphs">Volume</text>
<text x="875" y="379.4" font-size="6.7" fill="#4f4f4f" text-anchor="end" textLength="30" lengthAdjust="spacingAndGlyphs">130.407 ml</text>
<text x="734.6" y="395.2" font-size="6.7" fill="#4a4a4a" textLength="14.4" lengthAdjust="spacingAndGlyphs">Price</text>
<text x="875" y="395.2" font-size="6.7" fill="#4f4f4f" text-anchor="end" textLength="23" lengthAdjust="spacingAndGlyphs">28.690 $</text>
<text x="734.6" y="411" font-size="6.7" fill="#4a4a4a" textLength="42.8" lengthAdjust="spacingAndGlyphs">Estimated time</text>
<text x="875" y="411" font-size="6.7" fill="#4f4f4f" text-anchor="end" textLength="35.4" lengthAdjust="spacingAndGlyphs">2 h 41 m 12 s</text>
<circle cx="765.4" cy="361" r="3.2" fill="none" stroke="#4a8ce8" stroke-width="0.7"/><path d="M765.4,360.4 L765.4,362.8 M765.4,359 L765.4,359.7" stroke="#4a8ce8" stroke-width="0.7"/>
<text x="728.4" y="432" font-size="6.5" fill="#3f80ea" textLength="45" lengthAdjust="spacingAndGlyphs">Slice Parameter</text>
<text x="881" y="432" font-size="6.5" fill="#3f80ea" text-anchor="end" textLength="55.6" lengthAdjust="spacingAndGlyphs">0.050mm — 2.200s</text>
<rect x="728.9" y="440.9" width="151.6" height="16.4" rx="3" fill="#f3f7ff" stroke="#5e96f3" stroke-width="0.9"/>
<text x="804.7" y="451.5" font-size="7.5" fill="#4585ee" text-anchor="middle" textLength="21.6" lengthAdjust="spacingAndGlyphs">Return</text>
<rect x="728.4" y="463" width="152.6" height="17.4" rx="3" fill="#3d83f7"/>
<text x="804.9" y="474.6" font-size="7.5" fill="#ffffff" text-anchor="middle" textLength="46" lengthAdjust="spacingAndGlyphs">Save Slice File</text>
</svg>
</body></html>
